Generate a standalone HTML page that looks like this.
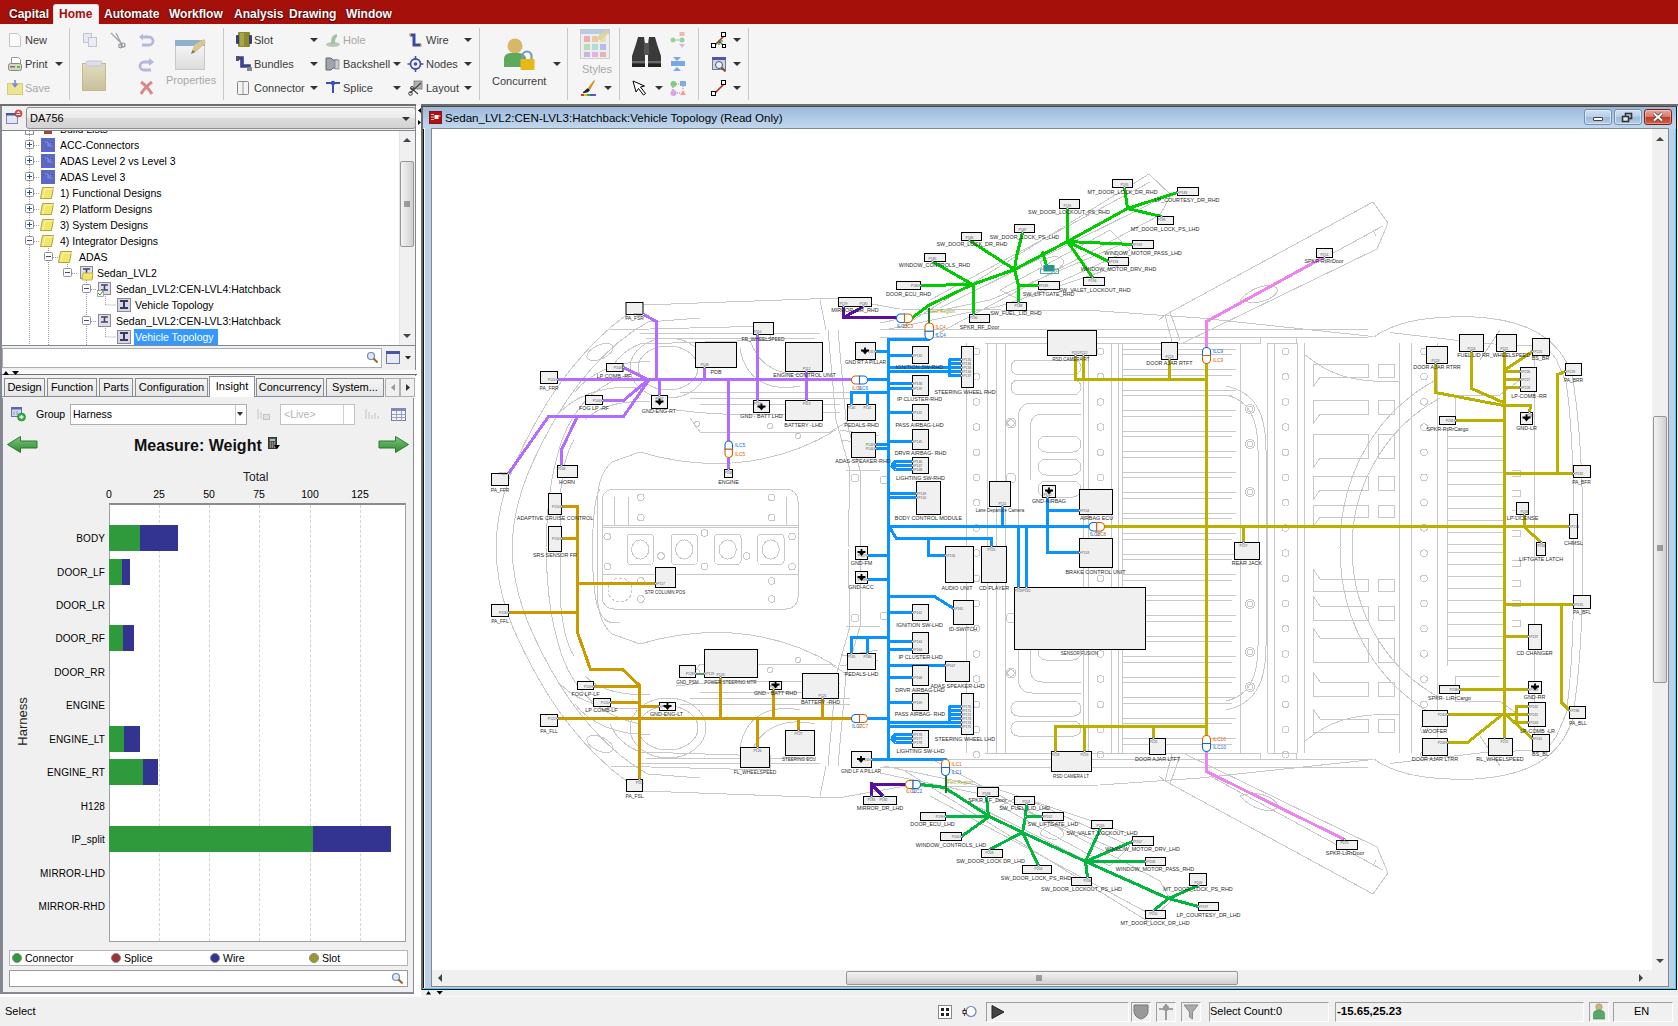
<!DOCTYPE html>
<html lang="en"><head><meta charset="utf-8"><title>Capital - Vehicle Topology</title>
<style>
*{box-sizing:border-box;margin:0;padding:0}
html,body{width:1678px;height:1026px;overflow:hidden;background:#f0f0f0;font-family:"Liberation Sans",sans-serif;font-size:12px;color:#000}
.a{position:absolute}
.t{position:absolute;white-space:nowrap;line-height:1}
#menubar{left:0;top:0;width:1678px;height:24px;background:#a6100b}
.mi{position:absolute;top:7px;font-weight:bold;font-size:12px;color:#fff;white-space:nowrap;line-height:14px;text-shadow:0 0 2px #400,0 1px 1px #500}
#hometab{left:53px;top:4px;width:46px;height:21px;background:#f5f5f5;border:1px solid #cfe0ea;border-bottom:none;border-radius:3px 3px 0 0}
#ribbon{left:0;top:24px;width:1678px;height:80px;background:#f5f5f5}
.rl{position:absolute;font-size:11px;color:#3c3c3c;white-space:nowrap;line-height:14px}
.rl.g{color:#a8a8a8}
.sep{position:absolute;top:28px;width:1px;height:72px;background:#c9c9c9}
.dd{position:absolute;width:0;height:0;border-left:4px solid transparent;border-right:4px solid transparent;border-top:4px solid #333}
</style></head><body>

<div id="menubar" class="a"></div><div id="hometab" class="a"></div>
<div class="mi" style="left:9px;">Capital</div>
<div class="mi" style="left:59px;color:#a6100b;text-shadow:none;">Home</div>
<div class="mi" style="left:104px;">Automate</div>
<div class="mi" style="left:169px;">Workflow</div>
<div class="mi" style="left:234px;">Analysis</div>
<div class="mi" style="left:289px;">Drawing</div>
<div class="mi" style="left:346px;">Window</div>
<div id="ribbon" class="a"></div>
<div class="a" style="left:0;top:104px;width:1678px;height:2px;background:#f0f0f0"></div>
<div class="sep" style="left:69px"></div>
<div class="sep" style="left:223px"></div>
<div class="sep" style="left:479px"></div>
<div class="sep" style="left:567px"></div>
<div class="sep" style="left:619px"></div>
<div class="sep" style="left:698px"></div>
<div class="sep" style="left:748px"></div>
<div class="rl" style="left:25px;top:33px">New</div>
<div class="rl" style="left:25px;top:57px">Print</div>
<div class="rl g" style="left:25px;top:81px">Save</div>
<div class="rl" style="left:254px;top:33px">Slot</div>
<div class="rl" style="left:254px;top:57px">Bundles</div>
<div class="rl" style="left:254px;top:81px">Connector</div>
<div class="rl g" style="left:343px;top:33px">Hole</div>
<div class="rl" style="left:343px;top:57px">Backshell</div>
<div class="rl" style="left:343px;top:81px">Splice</div>
<div class="rl" style="left:426px;top:33px">Wire</div>
<div class="rl" style="left:426px;top:57px">Nodes</div>
<div class="rl" style="left:426px;top:81px">Layout</div>
<div class="rl g" style="left:166px;top:73px">Properties</div>
<div class="rl" style="left:492px;top:74px">Concurrent</div>
<div class="rl g" style="left:582px;top:62px">Styles</div>
<div class="dd" style="left:55px;top:62px"></div>
<div class="dd" style="left:310px;top:38px"></div>
<div class="dd" style="left:310px;top:62px"></div>
<div class="dd" style="left:310px;top:86px"></div>
<div class="dd" style="left:393px;top:62px"></div>
<div class="dd" style="left:393px;top:86px"></div>
<div class="dd" style="left:464px;top:38px"></div>
<div class="dd" style="left:464px;top:62px"></div>
<div class="dd" style="left:464px;top:86px"></div>
<div class="dd" style="left:553px;top:62px"></div>
<div class="dd" style="left:604px;top:86px"></div>
<div class="dd" style="left:655px;top:86px"></div>
<div class="dd" style="left:733px;top:38px"></div>
<div class="dd" style="left:733px;top:62px"></div>
<div class="dd" style="left:733px;top:86px"></div>
<svg class="a" style="left:0;top:24px" width="760" height="80" viewBox="0 24 760 80">
<defs>
<linearGradient id="gPaste" x1="0" y1="0" x2="0" y2="1"><stop offset="0" stop-color="#e2dcc0"/><stop offset="1" stop-color="#c9c09a"/></linearGradient>
<linearGradient id="gProp" x1="0" y1="0" x2="0" y2="1"><stop offset="0" stop-color="#fafafa"/><stop offset="1" stop-color="#dcdcdc"/></linearGradient>
</defs>
<!-- New -->
<path d="M9.5 33.5h8l3 3v10h-11z" fill="#fbfbfb" stroke="#c4c4c4"/>
<!-- Print -->
<path d="M11.5 57.5h7l2 2v5h-9z" fill="#fff" stroke="#9a9a9a"/><rect x="8.5" y="63.5" width="13" height="7" rx="2" fill="#d9d7c3" stroke="#8a8872"/><rect x="17" y="66" width="3" height="2" fill="#3ecf3e"/><rect x="10" y="66" width="5" height="1.5" fill="#77756a"/>
<!-- Save -->
<rect x="7.5" y="83.5" width="15" height="11" fill="#ebe58f" stroke="#d3cd7a"/><path d="M15 80v6m-2.5-2.5l2.5 3 2.5-3" stroke="#7a86e0" stroke-width="1.6" fill="none"/>
<!-- Copy -->
<rect x="83.5" y="33.5" width="8" height="9" fill="#e8e8f0" stroke="#c4c4d0"/><rect x="88.5" y="37.5" width="8" height="9" fill="#ececf4" stroke="#c4c4d0"/>
<!-- Scissors -->
<path d="M111 33l11 11M116 33l5 10" stroke="#a0a0a8" stroke-width="1.2" fill="none"/><circle cx="123" cy="45" r="2" fill="none" stroke="#909098" stroke-width="1.2"/><circle cx="120.5" cy="46" r="1.8" fill="none" stroke="#909098" stroke-width="1.2"/>
<!-- Undo -->
<path d="M141 37h8a4 4 0 0 1 0 8h-7" fill="none" stroke="#b4b8dc" stroke-width="2.8"/><path d="M139 37l4-3.5v7z" fill="#b4b8dc"/>
<!-- Redo -->
<path d="M151 62h-7a4 4 0 0 0 0 8h7" fill="none" stroke="#b4b8dc" stroke-width="2.8"/><path d="M154 62l-5-4v8z" fill="#b4b8dc"/>
<!-- Delete -->
<path d="M141 82q6 4 11 12M152 82q-7 5-11 12" stroke="#d98888" stroke-width="3" fill="none"/>
<!-- Paste -->
<rect x="82.5" y="63.5" width="23" height="27" fill="url(#gPaste)" stroke="#c3ba94"/><rect x="86" y="61" width="16" height="5" rx="1.5" fill="#dedee8" stroke="#c4c4d4"/>
<!-- Properties -->
<rect x="175.5" y="40.5" width="29" height="29" fill="url(#gProp)" stroke="#c8c8c8"/><rect x="175" y="40" width="30" height="6" fill="#8fb0d0"/><path d="M191 54l3-9 10-6 2 4-9 8z" fill="#d8c690"/><path d="M191 54l1.5-4 3 2z" fill="#8a7a50"/>
<!-- Slot -->
<rect x="238" y="32" width="12" height="15" rx="1" fill="#8c8a2e"/><rect x="236" y="35" width="3" height="9" rx="1" fill="#3a3f70"/><rect x="249" y="35" width="3" height="9" rx="1" fill="#3a3f70"/><rect x="240" y="33" width="4" height="13" fill="#a8a648"/>
<!-- Bundles -->
<path d="M238 58h4v8h7v4" fill="none" stroke="#3c4290" stroke-width="3.6"/><rect x="236" y="56" width="3" height="5" fill="#555"/><rect x="247" y="67" width="5" height="4" fill="#888"/>
<!-- Connector -->
<rect x="237.5" y="81.5" width="11" height="13" rx="1" fill="#f4f4f4" stroke="#888"/><path d="M243 82v12" stroke="#999"/>
<!-- Hole -->
<ellipse cx="333" cy="44.5" rx="7" ry="2.5" fill="#b8c8b8"/><path d="M331 44c0-6 1-9 6-10v3c-2 1-2 4-2 7z" fill="#a4c0a4"/>
<!-- Backshell -->
<path d="M326 58h5l2 2h5v8h-5l-2 2h-5z" fill="#a0a4ac" stroke="#60646c"/><rect x="335" y="60" width="4" height="9" fill="#c8ccd4" stroke="#70747c" stroke-width=".6"/>
<!-- Splice -->
<path d="M326 83h14M333 83v10" stroke="#3c50b0" stroke-width="2" fill="none"/><circle cx="333" cy="83" r="2.2" fill="#3c50b0"/>
<!-- Wire -->
<path d="M410 35h4v10h7" fill="none" stroke="#3c48a8" stroke-width="3"/><rect x="409" y="33.5" width="2" height="2" fill="#e8b030"/><rect x="420" y="44.5" width="2" height="2" fill="#e8b030"/>
<!-- Nodes -->
<circle cx="415.5" cy="64" r="5" fill="none" stroke="#4450b0" stroke-width="1.8"/><circle cx="415.5" cy="64" r="1.8" fill="#4450b0"/><path d="M415.5 56v3m0 10v3m-8-8h3m10 0h3" stroke="#4450b0" stroke-width="1.6"/>
<!-- Layout -->
<rect x="414" y="81" width="8" height="8" fill="#b0b0b0" stroke="#777" stroke-width=".8"/><path d="M410 93l11-10M411 88l7 6" stroke="#444" stroke-width="1.2"/><circle cx="410.5" cy="93.5" r="1.8" fill="none" stroke="#333"/><circle cx="412" cy="88" r="1.5" fill="none" stroke="#333"/>
<!-- Concurrent -->
<circle cx="515" cy="46" r="7.5" fill="#d6b868"/><path d="M504 67v-8c0-4 4-6 7-6h8c4 0 7 3 7 6v8z" fill="#5cab5c"/><path d="M522.5 60v-4a4.5 4.5 0 0 1 9 0v4" fill="none" stroke="#7a9ac0" stroke-width="2.2"/><rect x="520.5" y="59" width="14" height="11" rx="1" fill="#e8b818"/>
<!-- Styles -->
<rect x="580.5" y="29.5" width="29" height="29" fill="#ededed" stroke="#cfcfcf"/><rect x="580" y="29" width="30" height="5" fill="#b8cce0"/>
<g opacity=".75"><rect x="584" y="36" width="6" height="6" fill="#e89aa8"/><rect x="592" y="36" width="6" height="6" fill="#e8c088"/><rect x="600" y="36" width="6" height="6" fill="#e0e090"/><rect x="584" y="44" width="6" height="6" fill="#a8d8a0"/><rect x="592" y="44" width="6" height="6" fill="#98d8d0"/><rect x="600" y="44" width="6" height="6" fill="#a0b0e8"/><rect x="584" y="52" width="6" height="5" fill="#c0a0e0"/><rect x="592" y="52" width="6" height="5" fill="#e0a0d8"/><rect x="600" y="52" width="6" height="5" fill="#e8a0a0"/></g>
<path d="M597 41l2-6 9-6 2 3-8 7z" fill="#ddd0a0" opacity=".9"/>
<!-- Brush -->
<path d="M583 92c2-1 3-3 5-4l2 2c-1 2-3 3-7 3z" fill="#222"/><path d="M588 88l6-8 1 1-5 9z" fill="#d89028"/><rect x="581" y="94" width="3" height="2" fill="#e03030"/><rect x="584" y="94" width="3" height="2" fill="#e0c030"/><rect x="587" y="94" width="3" height="2" fill="#30b040"/><rect x="590" y="94" width="3" height="2" fill="#3060e0"/><rect x="593" y="94" width="3" height="2" fill="#a030d0"/>
<!-- Binoculars -->
<path d="M636 44l2-7h6l1 7v20h-13v-8z" fill="#3a3a3a"/><path d="M657 44l-2-7h-6l-1 7v20h13v-8z" fill="#3a3a3a"/><rect x="644" y="43" width="5" height="12" fill="#555"/><rect x="632" y="64" width="13" height="3" fill="#222"/><rect x="648" y="64" width="13" height="3" fill="#222"/><rect x="632" y="61.5" width="13" height="1" fill="#999"/><rect x="648" y="61.5" width="13" height="1" fill="#999"/>
<!-- Cursor -->
<path d="M633 81l3 11 2.5-3.5 5 6.5 2-1.5-5-6.5 4-1z" fill="#fff" stroke="#000" stroke-width="1"/>
<!-- small icons col -->
<g opacity=".6"><circle cx="673" cy="40" r="2.5" fill="#58c058"/><circle cx="682" cy="40" r="2.5" fill="#58c058"/><rect x="679.5" y="32" width="5" height="4" fill="#f09090"/><path d="M682 48l-3-4h6z" fill="#c090e0"/><path d="M675.5 40h4" stroke="#888"/></g>
<path d="M673 57h8l-4 4zM673 71h8l-4-4z" fill="#78a8e8"/><rect x="671" y="61" width="14" height="5" fill="#78a8e8"/>
<g opacity=".75"><circle cx="673.5" cy="84" r="3" fill="#58c058"/><rect x="680" y="81" width="6" height="5" fill="#6090e0"/><circle cx="673.5" cy="93" r="3" fill="#d088e0"/><path d="M683 90l3 5h-6z" fill="#f08080"/><path d="M676 84h4m-7 3v3m4 3h3m3-7v4" stroke="#666" stroke-dasharray="1 1"/></g>
<!-- right icons -->
<path d="M714 46l11-11" stroke="#c02020" stroke-width="1.6"/><rect x="711.5" y="43.5" width="4" height="4" fill="#fff" stroke="#000"/><rect x="721.5" y="32.5" width="4" height="4" fill="#fff" stroke="#000"/><path d="M719 41l5 5m-5-5v4m0-4h4" stroke="#208020" stroke-width="1.2" fill="none"/><rect x="722.5" y="44.5" width="3" height="3" fill="#fff" stroke="#000"/>
<rect x="712.5" y="57.5" width="13" height="12" fill="#d0d4e8" stroke="#7078a8"/><rect x="712" y="57" width="14" height="3" fill="#5058a0"/><circle cx="719" cy="65" r="3.5" fill="#e8f0ff" stroke="#555"/><path d="M721.5 67.5l4 4" stroke="#805020" stroke-width="2"/>
<path d="M714 94l11-11" stroke="#c02020" stroke-width="1.6"/><rect x="711.5" y="91.5" width="4" height="4" fill="#fff" stroke="#000"/><rect x="721.5" y="80.5" width="4" height="4" fill="#fff" stroke="#000"/>
</svg>
<style>
#lp{left:0;top:106px;width:416px;height:888px;background:#f0f0f0;border-left:2px solid #828790;border-right:1px solid #828790;border-bottom:1px solid #828790}
.tr{position:absolute;font-size:10.5px;white-space:nowrap;line-height:16px;height:16px;color:#000}
.tab{position:absolute;top:378px;height:18px;border:1px solid #898c95;border-bottom:none;background:linear-gradient(#f4f4f4,#e6e6e6);font-size:11px;line-height:17px;text-align:center;white-space:nowrap;color:#000}
.cl{position:absolute;font-size:10px;white-space:nowrap;line-height:12px;letter-spacing:.1px;text-align:right;width:100px}
.ax{position:absolute;font-size:10.5px;white-space:nowrap;line-height:12px;text-align:center;width:30px}
.bar{position:absolute;height:26px}
</style>
<div id="lp" class="a"></div>
<div class="a" style="left:416px;top:106px;width:5px;height:891px;background:#fff"></div>
<div class="a" style="left:414px;top:376px;width:3px;height:621px;background:#fff"></div>
<div class="a" style="left:0;top:994px;width:421px;height:3px;background:#fff"></div>
<div class="a" style="left:0;top:104px;width:416px;height:2px;background:#6e6e6e"></div>
<div class="a" style="left:26px;top:107px;width:390px;height:22px;border:1px solid #8e8f8f;border-radius:3px;background:linear-gradient(#f4f4f4 0%,#ebebeb 50%,#dddddd 50%,#d2d2d2 100%)"></div>
<div class="t" style="left:30px;top:113px;font-size:11px">DA756</div>
<div class="dd" style="left:402px;top:117px"></div>
<svg class="a" style="left:5px;top:108px" width="20" height="20"><rect x="1.5" y="5.5" width="11" height="10" fill="#e4e6f4" stroke="#8088b0"/><rect x="1" y="5" width="12" height="2.5" fill="#4a54a0"/><circle cx="13.5" cy="5.5" r="3.5" fill="#e04848" stroke="#b02828" stroke-width=".6"/><rect x="11.5" y="6" width="4" height="1" fill="#fff"/><path d="M13.5 3l1.8 2h-3.6z" fill="#fff"/></svg>
<div class="a" style="left:2px;top:130px;width:413px;height:216px;background:#fff;border-top:1px solid #828790;border-bottom:1px solid #828790"></div>
<div class="a" style="left:399px;top:131px;width:16px;height:214px;background:#f0f0f0;border-left:1px solid #e4e4e4"></div>
<div class="a" style="left:400px;top:161px;width:14px;height:86px;border:1px solid #979797;border-radius:2px;background:linear-gradient(90deg,#f3f3f3,#e2e2e2 50%,#cfcfcf)"></div>
<svg class="a" style="left:399px;top:131px" width="16" height="214"><path d="M4 11l4-4 4 4z" fill="#444"/><path d="M4 203l4 4 4-4z" fill="#444"/><path d="M5 71h6M5 73h6M5 75h6" stroke="#555" stroke-width="1"/></svg>
<svg class="a" style="left:0;top:131px" width="399" height="214" viewBox="0 131 399 214"><g stroke="#9a9a9a" stroke-width="1" stroke-dasharray="1 1" fill="none"><path d="M29.5 131v214"/><path d="M48.5 246v99"/><path d="M67.5 262v6"/><path d="M86.5 278v67"/><path d="M105.5 294v11h10"/><path d="M105.5 326v11h10"/><path d="M34 145.5h6"/><path d="M34 161.5h6"/><path d="M34 177.5h6"/><path d="M34 193.5h6"/><path d="M34 209.5h6"/><path d="M34 225.5h6"/><path d="M34 241.5h6"/><path d="M53 257.5h6"/><path d="M72 273.5h6"/><path d="M91 289.5h6"/><path d="M91 321.5h6"/></g><rect x="44" y="131" width="8" height="3" fill="#a84040"/><path d="M25.5 131v3.5h8v-3.5" fill="none" stroke="#919191"/><rect x="25.5" y="140.5" width="8" height="8" rx="1" fill="#fcfcfc" stroke="#919191"/><path d="M27 144.5h5" stroke="#334a94"/><path d="M29.5 142v5" stroke="#334a94"/><rect x="41" y="138" width="14" height="14" fill="#5e66c4"/><path d="M45 142h3v4h4M48 144h3" stroke="#8c92dc" fill="none"/><rect x="25.5" y="156.5" width="8" height="8" rx="1" fill="#fcfcfc" stroke="#919191"/><path d="M27 160.5h5" stroke="#334a94"/><path d="M29.5 158v5" stroke="#334a94"/><rect x="41" y="154" width="14" height="14" fill="#5e66c4"/><path d="M45 158h3v4h4M48 160h3" stroke="#8c92dc" fill="none"/><rect x="25.5" y="172.5" width="8" height="8" rx="1" fill="#fcfcfc" stroke="#919191"/><path d="M27 176.5h5" stroke="#334a94"/><path d="M29.5 174v5" stroke="#334a94"/><rect x="41" y="170" width="14" height="14" fill="#5e66c4"/><path d="M45 174h3v4h4M48 176h3" stroke="#8c92dc" fill="none"/><rect x="25.5" y="188.5" width="8" height="8" rx="1" fill="#fcfcfc" stroke="#919191"/><path d="M27 192.5h5" stroke="#334a94"/><path d="M29.5 190v5" stroke="#334a94"/><path d="M42.5 187.5h11l-2 11h-11z" fill="#f1e66a" stroke="#b0a43a"/><path d="M43 198l2-9h9" fill="none" stroke="#fbf6b0"/><rect x="25.5" y="204.5" width="8" height="8" rx="1" fill="#fcfcfc" stroke="#919191"/><path d="M27 208.5h5" stroke="#334a94"/><path d="M29.5 206v5" stroke="#334a94"/><path d="M42.5 203.5h11l-2 11h-11z" fill="#f1e66a" stroke="#b0a43a"/><path d="M43 214l2-9h9" fill="none" stroke="#fbf6b0"/><rect x="25.5" y="220.5" width="8" height="8" rx="1" fill="#fcfcfc" stroke="#919191"/><path d="M27 224.5h5" stroke="#334a94"/><path d="M29.5 222v5" stroke="#334a94"/><path d="M42.5 219.5h11l-2 11h-11z" fill="#f1e66a" stroke="#b0a43a"/><path d="M43 230l2-9h9" fill="none" stroke="#fbf6b0"/><rect x="25.5" y="236.5" width="8" height="8" rx="1" fill="#fcfcfc" stroke="#919191"/><path d="M27 240.5h5" stroke="#334a94"/><path d="M42.5 235.5h11l-2 11h-11z" fill="#f1e66a" stroke="#b0a43a"/><path d="M43 246l2-9h9" fill="none" stroke="#fbf6b0"/><rect x="44.5" y="252.5" width="8" height="8" rx="1" fill="#fcfcfc" stroke="#919191"/><path d="M46 256.5h5" stroke="#334a94"/><path d="M60.5 251.5h11l-2 11h-11z" fill="#f1e66a" stroke="#b0a43a"/><path d="M61 262l2-9h9" fill="none" stroke="#fbf6b0"/><rect x="63.5" y="268.5" width="8" height="8" rx="1" fill="#fcfcfc" stroke="#919191"/><path d="M65 272.5h5" stroke="#334a94"/><rect x="80.5" y="266.5" width="12" height="12" fill="#e0e0e4" stroke="#8a8a92"/><path d="M83 269h7M83 274h7M86.5 269v5" stroke="#40407a" stroke-width="1.6"/><path d="M83 273h10l-1 7h-10z" fill="#f1e66a" stroke="#b0a43a" stroke-width=".7"/><rect x="82.5" y="284.5" width="8" height="8" rx="1" fill="#fcfcfc" stroke="#919191"/><path d="M84 288.5h5" stroke="#334a94"/><rect x="98.5" y="282.5" width="12" height="12" fill="#e0e0e4" stroke="#8a8a92"/><path d="M101 285h7M101 290h7M104.5 285v5" stroke="#40407a" stroke-width="1.6"/><rect x="97.5" y="290.5" width="6" height="6" fill="#fff" stroke="#888" stroke-width=".7"/><path d="M98 293l2 2 3-4" stroke="#20a020" fill="none"/><rect x="117.5" y="298.5" width="13" height="13" fill="#d8d8e0" stroke="#8a8a92"/><path d="M120 301h8M120 308h8M124 301v7" stroke="#38386e" stroke-width="2"/><rect x="82.5" y="316.5" width="8" height="8" rx="1" fill="#fcfcfc" stroke="#919191"/><path d="M84 320.5h5" stroke="#334a94"/><rect x="98.5" y="314.5" width="12" height="12" fill="#e0e0e4" stroke="#8a8a92"/><path d="M101 317h7M101 322h7M104.5 317v5" stroke="#40407a" stroke-width="1.6"/><rect x="117.5" y="330.5" width="13" height="13" fill="#d8d8e0" stroke="#8a8a92"/><path d="M120 333h8M120 340h8M124 333v7" stroke="#38386e" stroke-width="2"/></svg>
<div class="a" style="left:134px;top:329px;width:84px;height:16px;background:#3399ff"></div>
<div class="a" style="left:60px;top:131px;width:100px;height:4px;overflow:hidden"><div class="tr" style="left:0;top:-10px">Build Lists</div></div>
<div class="tr" style="left:60px;top:137px">ACC-Connectors</div>
<div class="tr" style="left:60px;top:153px">ADAS Level 2 vs Level 3</div>
<div class="tr" style="left:60px;top:169px">ADAS Level 3</div>
<div class="tr" style="left:60px;top:185px">1) Functional Designs</div>
<div class="tr" style="left:60px;top:201px">2) Platform Designs</div>
<div class="tr" style="left:60px;top:217px">3) System Designs</div>
<div class="tr" style="left:60px;top:233px">4) Integrator Designs</div>
<div class="tr" style="left:79px;top:249px">ADAS</div>
<div class="tr" style="left:97px;top:265px">Sedan_LVL2</div>
<div class="tr" style="left:116px;top:281px">Sedan_LVL2:CEN-LVL4:Hatchback</div>
<div class="tr" style="left:135px;top:297px">Vehicle Topology</div>
<div class="tr" style="left:116px;top:313px">Sedan_LVL2:CEN-LVL3:Hatchback</div>
<div class="tr" style="left:135px;top:329px;color:#fff">Vehicle Topology</div>
<div class="a" style="left:2px;top:348px;width:380px;height:20px;background:#fff;border:1px solid #abadb3"></div>
<svg class="a" style="left:364px;top:350px" width="50" height="16"><circle cx="7" cy="6" r="3.5" fill="#dce8f8" stroke="#7a8aa8" stroke-width="1.2"/><path d="M9.5 8.5l4 4" stroke="#9a6420" stroke-width="2"/><rect x="22.5" y="1.5" width="13" height="12" fill="#e8eaf4" stroke="#7078a8"/><rect x="22" y="1" width="14" height="3" fill="#4a54a0"/><path d="M41 6h6l-3 3.5z" fill="#222"/></svg>
<div class="a" style="left:2px;top:370px;width:414px;height:4px;background:#fafafa"></div><div class="a" style="left:0;top:374px;width:417px;height:1px;background:#6e6e6e"></div>
<svg class="a" style="left:0;top:369px" width="30" height="8"><path d="M3 6l3-4 3 4zM12 2l3.5 4 3.5-4z" fill="#000"/></svg>
<svg class="a" style="left:416px;top:106px" width="6" height="24"><path d="M5 2l-3 2.5 3 2.5zM2 14l3 2.5-3 2.5z" fill="#000"/></svg>
<div class="a" style="left:2px;top:396px;width:412px;height:1px;background:#898c95"></div>
<div class="tab" style="left:4px;width:41px">Design</div>
<div class="tab" style="left:47px;width:50px">Function</div>
<div class="tab" style="left:99px;width:34px">Parts</div>
<div class="tab" style="left:135px;width:73px">Configuration</div>
<div class="tab" style="left:256px;width:68px">Concurrency</div>
<div class="tab" style="left:326px;width:58px">System...</div>
<div class="tab" style="left:209px;top:376px;width:46px;height:21px;background:#fff;line-height:19px">Insight</div>
<div class="a" style="left:384px;top:377px;width:31px;height:20px;background:#f0f0f0"></div>
<div class="a" style="left:385px;top:378px;width:15px;height:19px;border:1px solid #b0b0b0;background:#f0f0f0"></div><div class="a" style="left:400px;top:378px;width:15px;height:19px;border:1px solid #b0b0b0;background:#f0f0f0"></div>
<svg class="a" style="left:385px;top:378px" width="30" height="19"><path d="M10 6l-4 3.5 4 3.5z" fill="#999"/><path d="M21 6l4 3.5-4 3.5z" fill="#333"/><path d="M-2 0q4 9 -1 19" stroke="#898c95" fill="none"/></svg>
<div class="a" style="left:2px;top:398px;width:412px;height:595px;border-left:1px solid #898c95;border-right:1px solid #898c95;border-bottom:1px solid #898c95"></div>
<svg class="a" style="left:10px;top:405px" width="20" height="18"><rect x="1.5" y="2.5" width="10" height="9" fill="#d4d8f0" stroke="#6870b0"/><rect x="1" y="2" width="11" height="2.5" fill="#5a64b4"/><path d="M3 7h2M6 7h2M3 9h2M6 9h2" stroke="#8890c8"/><circle cx="11.5" cy="12" r="4" fill="#30b040" stroke="#188028" stroke-width=".6"/><path d="M9.5 12h4M11.5 10v4" stroke="#fff" stroke-width="1.3"/></svg>
<div class="t" style="left:36px;top:409px;font-size:10.5px">Group</div>
<div class="a" style="left:70px;top:404px;width:177px;height:21px;background:#fff;border:1px solid #abadb3"></div><div class="a" style="left:235px;top:405px;width:1px;height:19px;background:#c8c8c8"></div>
<div class="t" style="left:73px;top:409px;font-size:10.5px">Harness</div>
<div class="dd" style="left:237px;top:412px;border-left-width:3.5px;border-right-width:3.5px"></div>
<div class="a" style="left:280px;top:404px;width:75px;height:21px;background:#fff;border:1px solid #c0c2c8"></div><div class="a" style="left:343px;top:405px;width:1px;height:19px;background:#d0d0d0"></div>
<div class="t" style="left:284px;top:409px;font-size:10.5px;color:#b4b4b4">&lt;Live&gt;</div>
<svg class="a" style="left:255px;top:405px" width="155" height="18"><g stroke="#c4c4c4" fill="none"><path d="M3 4v10M6 7v7M9 10v4"/><rect x="8.5" y="9.5" width="6" height="5" fill="#e0e0e0"/><path d="M111 4v10M114 7v7M117 10v4M120 8v6M123 11v3"/></g><rect x="136.5" y="3.5" width="14" height="12" fill="#f4f4fa" stroke="#7a80a8"/><rect x="136" y="3" width="15" height="3" fill="#8088b8"/><path d="M137 9.5h14M137 12.5h14M141.5 6v10M146.5 6v10" stroke="#9aa0c0"/></svg>
<svg class="a" style="left:5px;top:434px" width="406" height="22"><defs><linearGradient id="gArr" x1="0" y1="0" x2="0" y2="1"><stop offset="0" stop-color="#7cc47c"/><stop offset="1" stop-color="#2e8c2e"/></linearGradient></defs><path d="M2.5 10.5l13-8v4.5h16.5v7h-16.5v4.5z" fill="url(#gArr)" stroke="#2a7a2a"/><path d="M403.5 10.5l-13-8v4.5h-16.5v7h16.5v4.5z" fill="url(#gArr)" stroke="#2a7a2a"/><rect x="263.5" y="3.5" width="8" height="11" fill="#555" stroke="#333"/><rect x="265" y="5" width="5" height="2" fill="#9c9"/><path d="M265 9h5M265 11h5M265 13h5" stroke="#bbb" stroke-dasharray="1 1"/><path d="M269 11h6l-3 4z" fill="#000"/></svg>
<div class="t" style="left:134px;top:438px;font-size:16px;font-weight:bold;color:#111">Measure: Weight</div>
<div class="t" style="left:243px;top:471px;font-size:12px;color:#222">Total</div>
<div class="ax" style="left:94px;top:488px">0</div>
<div class="ax" style="left:144px;top:488px">25</div>
<div class="ax" style="left:194px;top:488px">50</div>
<div class="ax" style="left:244px;top:488px">75</div>
<div class="ax" style="left:295px;top:488px">100</div>
<div class="ax" style="left:345px;top:488px">125</div>
<div class="a" style="left:109px;top:503px;width:297px;height:439px;background:#fff;border:1px solid #a0a0a0;border-top:2px solid #8c8c8c"></div>
<div class="a" style="left:159px;top:505px;width:0;height:436px;border-left:1px dashed #d4d4d4"></div>
<div class="a" style="left:209px;top:505px;width:0;height:436px;border-left:1px dashed #d4d4d4"></div>
<div class="a" style="left:259px;top:505px;width:0;height:436px;border-left:1px dashed #d4d4d4"></div>
<div class="a" style="left:310px;top:505px;width:0;height:436px;border-left:1px dashed #d4d4d4"></div>
<div class="a" style="left:360px;top:505px;width:0;height:436px;border-left:1px dashed #d4d4d4"></div>
<div class="cl" style="left:5px;top:533px">BODY</div>
<div class="cl" style="left:5px;top:567px">DOOR_LF</div>
<div class="cl" style="left:5px;top:600px">DOOR_LR</div>
<div class="cl" style="left:5px;top:633px">DOOR_RF</div>
<div class="cl" style="left:5px;top:667px">DOOR_RR</div>
<div class="cl" style="left:5px;top:700px">ENGINE</div>
<div class="cl" style="left:5px;top:734px">ENGINE_LT</div>
<div class="cl" style="left:5px;top:767px">ENGINE_RT</div>
<div class="cl" style="left:5px;top:801px">H128</div>
<div class="cl" style="left:5px;top:834px">IP_split</div>
<div class="cl" style="left:5px;top:868px">MIRROR-LHD</div>
<div class="cl" style="left:5px;top:901px">MIRROR-RHD</div>
<div class="bar" style="left:109px;top:525px;width:31px;background:#2e9a3c"></div><div class="bar" style="left:140px;top:525px;width:38px;background:#333391"></div>
<div class="bar" style="left:109px;top:559px;width:13px;background:#2e9a3c"></div><div class="bar" style="left:122px;top:559px;width:8px;background:#333391"></div>
<div class="bar" style="left:109px;top:625px;width:14px;background:#2e9a3c"></div><div class="bar" style="left:123px;top:625px;width:11px;background:#333391"></div>
<div class="bar" style="left:109px;top:726px;width:15px;background:#2e9a3c"></div><div class="bar" style="left:124px;top:726px;width:16px;background:#333391"></div>
<div class="bar" style="left:109px;top:759px;width:34px;background:#2e9a3c"></div><div class="bar" style="left:143px;top:759px;width:15px;background:#333391"></div>
<div class="bar" style="left:109px;top:826px;width:204px;background:#2e9a3c"></div><div class="bar" style="left:313px;top:826px;width:78px;background:#333391"></div>
<div class="t" style="left:-8px;top:715px;width:60px;text-align:center;font-size:13px;transform:rotate(-90deg);color:#222">Harness</div>
<div class="a" style="left:9px;top:950px;width:399px;height:16px;background:#fff;border:1px solid #b4b4b4"></div>
<div class="a" style="left:12px;top:953px;width:10px;height:10px;border-radius:5px;background:#2e9a3c;border:1px solid #888"></div><div class="t" style="left:25px;top:953px;font-size:10.5px">Connector</div>
<div class="a" style="left:111px;top:953px;width:10px;height:10px;border-radius:5px;background:#a03030;border:1px solid #888"></div><div class="t" style="left:124px;top:953px;font-size:10.5px">Splice</div>
<div class="a" style="left:210px;top:953px;width:10px;height:10px;border-radius:5px;background:#333391;border:1px solid #888"></div><div class="t" style="left:223px;top:953px;font-size:10.5px">Wire</div>
<div class="a" style="left:309px;top:953px;width:10px;height:10px;border-radius:5px;background:#9a982e;border:1px solid #888"></div><div class="t" style="left:322px;top:953px;font-size:10.5px">Slot</div>
<div class="a" style="left:9px;top:970px;width:399px;height:17px;background:#fff;border:1px solid #9a9a9a"></div>
<svg class="a" style="left:390px;top:971px" width="16" height="16"><circle cx="6" cy="6" r="3.5" fill="#dce8f8" stroke="#7a8aa8" stroke-width="1.2"/><path d="M8.5 8.5l4 4" stroke="#9a6420" stroke-width="2"/></svg>
<div class="a" style="left:421px;top:104px;width:1257px;height:2px;background:#6e6e6e"></div>
<div class="a" style="left:421px;top:106px;width:1256px;height:884px;background:#b9d1ea;border-left:2px solid #6a6a6a;border-right:1px solid #111;border-bottom:1px solid #111"></div>
<div class="a" style="left:424px;top:988px;width:1252px;height:1px;background:#38d8f8"></div>
<div class="a" style="left:1675px;top:128px;width:1px;height:861px;background:#38d8f8"></div>
<div class="a" style="left:423px;top:128px;width:1px;height:860px;background:#111"></div>
<div class="a" style="left:423px;top:107px;width:1253px;height:22px;background:linear-gradient(#9db9d9,#b4cde8 60%,#c2d8ee)"></div>
<div class="a" style="left:421px;top:106px;width:1256px;height:1px;background:#484848"></div>
<div class="t" style="left:445px;top:112px;font-size:11.6px;color:#000">Sedan_LVL2:CEN-LVL3:Hatchback:Vehicle Topology (Read Only)</div>
<svg class="a" style="left:429px;top:111px" width="14" height="14"><rect x=".5" y=".5" width="12" height="12" fill="#b01010" stroke="#901010"/><rect x="5.5" y="4" width="4" height="4" fill="#fff"/><path d="M2 3.5h3M2 6h3M2 8.5h3M9 5h2.5" stroke="#f0c0c0"/></svg>
<div class="a" style="left:1584px;top:109px;width:28px;height:16px;border:1px solid #6f8fb4;border-radius:3px;background:linear-gradient(#cfe0f2 0%,#b8cfe8 48%,#9fbbda 52%,#b4cce6 100%);box-shadow:inset 0 0 0 1px rgba(255,255,255,.5)"></div>
<div class="a" style="left:1614px;top:109px;width:28px;height:16px;border:1px solid #6f8fb4;border-radius:3px;background:linear-gradient(#cfe0f2 0%,#b8cfe8 48%,#9fbbda 52%,#b4cce6 100%);box-shadow:inset 0 0 0 1px rgba(255,255,255,.5)"></div>
<div class="a" style="left:1644px;top:109px;width:28px;height:16px;border:1px solid #7a2018;border-radius:3px;background:linear-gradient(#e8a898 0%,#d87868 48%,#c03c28 52%,#d06048 100%);box-shadow:inset 0 0 0 1px rgba(255,255,255,.35)"></div>
<svg class="a" style="left:1584px;top:109px" width="90" height="16"><rect x="9.5" y="8.5" width="9" height="3" rx=".5" fill="#fff" stroke="#444"/><rect x="41.5" y="4.5" width="6" height="5" fill="none" stroke="#333" stroke-width="1.6"/><rect x="38.5" y="7.5" width="6" height="5" fill="#dde8f4" stroke="#333" stroke-width="1.6"/><path d="M70 4.5l8 7M78 4.5l-8 7" stroke="#444" stroke-width="3.6"/><path d="M70 4.5l8 7M78 4.5l-8 7" stroke="#fff" stroke-width="2"/></svg>
<div class="a" style="left:431px;top:128px;width:1238px;height:859px;background:#f0f0f0;border:1px solid #888"></div>
<div class="a" style="left:424px;top:128px;width:1px;height:860px;background:#fff"></div>
<div class="a" style="left:432px;top:129px;width:1220px;height:841px;background:#fff"></div>
<div class="a" style="left:1653px;top:671px;width:14px;height:-0px"></div>
<div class="a" style="left:1653px;top:416px;width:14px;height:267px;border:1px solid #979797;border-radius:2px;background:linear-gradient(90deg,#f3f3f3,#e2e2e2 50%,#cfcfcf)"></div>
<svg class="a" style="left:1652px;top:130px" width="16" height="840"><path d="M4 11l4-4 4 4z" fill="#444"/><path d="M4 829l4 4 4-4z" fill="#444"/><path d="M5 416h6M5 418h6M5 420h6" stroke="#555"/></svg>
<div class="a" style="left:846px;top:971px;width:392px;height:14px;border:1px solid #979797;border-radius:2px;background:linear-gradient(#f3f3f3,#e2e2e2 50%,#cfcfcf)"></div>
<svg class="a" style="left:431px;top:970px" width="1221" height="16"><path d="M11 4l-4 4 4 4z" fill="#444"/><path d="M1208 4l4 4-4 4z" fill="#444"/><path d="M606 5v6M608 5v6M610 5v6" stroke="#555"/></svg>
<svg class="a" style="left:431px;top:130px" width="1221" height="840" viewBox="431 130 1221 840" font-family="Liberation Sans, sans-serif">
<g fill="none" stroke="#c8c8c8" stroke-width="1" shape-rendering="crispEdges"><path d="M496 548C497 500 512 465 537 420C560 378 600 328 643 305L838 298L900 309L1100 311L1200 318L1373 336.5"/>
<path d="M1374 337C1400 318 1440 316 1475 317C1530 320 1560 340 1572 375C1580 420 1583 480 1583 548"/>
<path d="M1390 332.5L1484 343.5L1546 346.5L1556 359L1566 382C1572 420 1574 470 1574 548"/>
<path d="M1534 360V548"/>
<path d="M512 548C513 505 527 470 550 428C572 388 606 345 648 322L700 318"/>
<path d="M546 548C547 500 552 470 562 440C575 405 600 380 640 372"/>
<path d="M560 548V500C562 470 566 452 574 440"/>
<path d="M597 548V500C599 480 603 470 612 462L640 452"/>
<path d="M610 330L770 326V340L640 344C625 350 615 360 610 372"/>
<path d="M640 333H820M646 338H815"/>
<ellipse cx="668" cy="368" rx="38" ry="30"/><ellipse cx="668" cy="368" rx="30" ry="22"/>
<path d="M575 392C590 372 620 360 650 362M560 412C580 392 610 385 640 388M585 420C600 405 625 400 650 402"/>
<ellipse cx="600" cy="352" rx="14" ry="7" transform="rotate(-25 600 352)"/>
<path d="M680 392H850M690 398H850M700 404H840M676 410C720 416 780 416 840 412"/>
<path d="M690 418L700 432H830L850 420"/><circle cx="697" cy="424" r="2.5"/><circle cx="770" cy="426" r="2.5"/><circle cx="798" cy="436" r="2.5"/>
<path d="M740 348C745 380 770 392 800 386M750 340C760 372 790 378 815 372"/>
<path d="M828 330L836 420L850 470L848 548M838 330L846 420L860 470V548M820 300L826 330"/>
<path d="M840 430L878 436M842 440L878 446M846 470H880"/>
<circle cx="855" cy="478" r="4"/><circle cx="884" cy="480" r="4"/>
<path d="M880 323L990 300L1120 245M884 330L1000 306L1130 262M640 452C700 470 770 470 836 430"/>
<path d="M880 329H1368M880 337H1368M985 343H1260V337M1268 343H1296V337"/><path d="M1159 320L1165 315L1373 202L1388 223L1377 249L1183 343"/>
<path d="M1383 226L1210 320M1373 230L1376 236M1240 300C1250 288 1272 280 1278 290C1274 300 1256 306 1240 300"/>
<path d="M1165 315L1172 342M1170 312L1180 340"/>
<path d="M905 325L1149 174L1171 195L1160 215L935 335"/>
<path d="M930 300L1150 182M940 308L1158 200M1000 290L1110 230L1130 250L1020 300Z"/>
<path d="M1040 262C1050 255 1062 255 1064 262C1060 272 1044 274 1040 262"/><g transform="matrix(1 0 0 -1 0 1096)"><path d="M496 548C497 500 512 465 537 420C560 378 600 328 643 305L838 298L900 309L1100 311L1200 318L1373 336.5"/>
<path d="M1374 337C1400 318 1440 316 1475 317C1530 320 1560 340 1572 375C1580 420 1583 480 1583 548"/>
<path d="M1390 332.5L1484 343.5L1546 346.5L1556 359L1566 382C1572 420 1574 470 1574 548"/>
<path d="M1534 360V548"/>
<path d="M512 548C513 505 527 470 550 428C572 388 606 345 648 322L700 318"/>
<path d="M546 548C547 500 552 470 562 440C575 405 600 380 640 372"/>
<path d="M560 548V500C562 470 566 452 574 440"/>
<path d="M597 548V500C599 480 603 470 612 462L640 452"/>
<path d="M610 330L770 326V340L640 344C625 350 615 360 610 372"/>
<path d="M640 333H820M646 338H815"/>
<ellipse cx="668" cy="368" rx="38" ry="30"/><ellipse cx="668" cy="368" rx="30" ry="22"/>
<path d="M575 392C590 372 620 360 650 362M560 412C580 392 610 385 640 388M585 420C600 405 625 400 650 402"/>
<ellipse cx="600" cy="352" rx="14" ry="7" transform="rotate(-25 600 352)"/>
<path d="M680 392H850M690 398H850M700 404H840M676 410C720 416 780 416 840 412"/>
<path d="M690 418L700 432H830L850 420"/><circle cx="697" cy="424" r="2.5"/><circle cx="770" cy="426" r="2.5"/><circle cx="798" cy="436" r="2.5"/>
<path d="M740 348C745 380 770 392 800 386M750 340C760 372 790 378 815 372"/>
<path d="M828 330L836 420L850 470L848 548M838 330L846 420L860 470V548M820 300L826 330"/>
<path d="M840 430L878 436M842 440L878 446M846 470H880"/>
<circle cx="855" cy="478" r="4"/><circle cx="884" cy="480" r="4"/>
<path d="M880 323L990 300L1120 245M884 330L1000 306L1130 262M640 452C700 470 770 470 836 430"/>
<path d="M880 329H1368M880 337H1368M985 343H1260V337M1268 343H1296V337"/><path d="M1159 320L1165 315L1373 202L1388 223L1377 249L1183 343"/>
<path d="M1383 226L1210 320M1373 230L1376 236M1240 300C1250 288 1272 280 1278 290C1274 300 1256 306 1240 300"/>
<path d="M1165 315L1172 342M1170 312L1180 340"/>
<path d="M905 325L1149 174L1171 195L1160 215L935 335"/>
<path d="M930 300L1150 182M940 308L1158 200M1000 290L1110 230L1130 250L1020 300Z"/>
<path d="M1040 262C1050 255 1062 255 1064 262C1060 272 1044 274 1040 262"/></g><path d="M966.5 343V753"/>
<path d="M987.5 343V753"/>
<path d="M996.5 343V753"/>
<path d="M1005 343V753"/>
<path d="M1083 343V753"/>
<path d="M1088 343V753"/>
<path d="M1111.5 343V753"/>
<path d="M1118 343V753"/>
<path d="M1267 343V753"/>
<path d="M1274.5 343V753"/>
<path d="M1297 343V753"/>
<path d="M1304.5 343V753"/>
<path d="M1399 343V753"/>
<path d="M1411.5 343V753"/>
<path d="M1437 343V753"/>
<circle cx="976.5" cy="351.5" r="3.3"/>
<circle cx="976.5" cy="376.7" r="3.3"/>
<circle cx="976.5" cy="401.9" r="3.3"/>
<circle cx="976.5" cy="427.1" r="3.3"/>
<circle cx="976.5" cy="452.3" r="3.3"/>
<circle cx="976.5" cy="477.5" r="3.3"/>
<circle cx="976.5" cy="502.7" r="3.3"/>
<circle cx="976.5" cy="527.9" r="3.3"/>
<circle cx="976.5" cy="553.1" r="3.3"/>
<circle cx="976.5" cy="578.3" r="3.3"/>
<circle cx="976.5" cy="603.5" r="3.3"/>
<circle cx="976.5" cy="628.7" r="3.3"/>
<circle cx="976.5" cy="653.9" r="3.3"/>
<circle cx="976.5" cy="679.1" r="3.3"/>
<circle cx="976.5" cy="704.3" r="3.3"/>
<circle cx="976.5" cy="729.5" r="3.3"/>
<circle cx="976.5" cy="754.7" r="3.3"/>
<circle cx="1100.5" cy="351.5" r="3.3"/>
<circle cx="1100.5" cy="376.7" r="3.3"/>
<circle cx="1100.5" cy="401.9" r="3.3"/>
<circle cx="1100.5" cy="427.1" r="3.3"/>
<circle cx="1100.5" cy="452.3" r="3.3"/>
<circle cx="1100.5" cy="477.5" r="3.3"/>
<circle cx="1100.5" cy="502.7" r="3.3"/>
<circle cx="1100.5" cy="527.9" r="3.3"/>
<circle cx="1100.5" cy="553.1" r="3.3"/>
<circle cx="1100.5" cy="578.3" r="3.3"/>
<circle cx="1100.5" cy="603.5" r="3.3"/>
<circle cx="1100.5" cy="628.7" r="3.3"/>
<circle cx="1100.5" cy="653.9" r="3.3"/>
<circle cx="1100.5" cy="679.1" r="3.3"/>
<circle cx="1100.5" cy="704.3" r="3.3"/>
<circle cx="1100.5" cy="729.5" r="3.3"/>
<circle cx="1100.5" cy="754.7" r="3.3"/>
<circle cx="1285.5" cy="351.5" r="3.3"/>
<circle cx="1285.5" cy="376.7" r="3.3"/>
<circle cx="1285.5" cy="401.9" r="3.3"/>
<circle cx="1285.5" cy="427.1" r="3.3"/>
<circle cx="1285.5" cy="452.3" r="3.3"/>
<circle cx="1285.5" cy="477.5" r="3.3"/>
<circle cx="1285.5" cy="502.7" r="3.3"/>
<circle cx="1285.5" cy="527.9" r="3.3"/>
<circle cx="1285.5" cy="553.1" r="3.3"/>
<circle cx="1285.5" cy="578.3" r="3.3"/>
<circle cx="1285.5" cy="603.5" r="3.3"/>
<circle cx="1285.5" cy="628.7" r="3.3"/>
<circle cx="1285.5" cy="653.9" r="3.3"/>
<circle cx="1285.5" cy="679.1" r="3.3"/>
<circle cx="1285.5" cy="704.3" r="3.3"/>
<circle cx="1285.5" cy="729.5" r="3.3"/>
<circle cx="1285.5" cy="754.7" r="3.3"/>
<circle cx="1424" cy="351.5" r="3.3"/>
<circle cx="1424" cy="376.7" r="3.3"/>
<circle cx="1424" cy="401.9" r="3.3"/>
<circle cx="1424" cy="427.1" r="3.3"/>
<circle cx="1424" cy="452.3" r="3.3"/>
<circle cx="1424" cy="477.5" r="3.3"/>
<circle cx="1424" cy="502.7" r="3.3"/>
<circle cx="1424" cy="527.9" r="3.3"/>
<circle cx="1424" cy="553.1" r="3.3"/>
<circle cx="1424" cy="578.3" r="3.3"/>
<circle cx="1424" cy="603.5" r="3.3"/>
<circle cx="1424" cy="628.7" r="3.3"/>
<circle cx="1424" cy="653.9" r="3.3"/>
<circle cx="1424" cy="679.1" r="3.3"/>
<circle cx="1424" cy="704.3" r="3.3"/>
<circle cx="1424" cy="729.5" r="3.3"/>
<circle cx="1424" cy="754.7" r="3.3"/>
<rect x="1011" y="360" width="70" height="14.5" rx="7"/>
<rect x="1011" y="721.5" width="70" height="14.5" rx="7"/>
<rect x="1011" y="380" width="70" height="14.5" rx="7"/>
<rect x="1011" y="701.5" width="70" height="14.5" rx="7"/>
<path d="M1081 403H1032C1022 403 1018 410 1018 420V676C1018 686 1022 693 1032 693H1081"/>
<path d="M1081 414H1042C1034 414 1030 420 1030 428V480M1030 616V668C1030 676 1034 682 1042 682H1081"/>
<rect x="1038" y="436" width="43" height="16" rx="8"/>
<rect x="1038" y="644" width="43" height="16" rx="8"/>
<rect x="1038" y="459" width="43" height="16" rx="8"/>
<rect x="1038" y="621" width="43" height="16" rx="8"/>
<rect x="1038" y="481" width="43" height="16" rx="8"/>
<rect x="1038" y="599" width="43" height="16" rx="8"/>
<circle cx="1011" cy="423" r="5"/><circle cx="1011" cy="423" r="3.2"/><circle cx="1011" cy="478" r="5"/><circle cx="1011" cy="673" r="5"/><circle cx="1011" cy="673" r="3.2"/><circle cx="1011" cy="618" r="5"/>
<path d="M1122 349H1236M1122 354.5H1232"/>
<path d="M1122 369.5H1236M1122 375H1232"/>
<path d="M1122 390H1236M1122 395.5H1232"/>
<path d="M1122 410.5H1236M1122 416H1232"/>
<path d="M1122 431H1236M1122 436.5H1232"/>
<path d="M1122 451.5H1236M1122 457H1232"/>
<path d="M1122 472H1236M1122 477.5H1232"/>
<path d="M1122 492.5H1236M1122 498H1232"/>
<path d="M1122 513H1236M1122 518.5H1232"/>
<path d="M1122 533.5H1236M1122 539H1232"/>
<path d="M1122 554H1236M1122 559.5H1232"/>
<path d="M1122 574.5H1236M1122 580H1232"/>
<path d="M1122 595H1236M1122 600.5H1232"/>
<path d="M1122 615.5H1236M1122 621H1232"/>
<path d="M1122 636H1236M1122 641.5H1232"/>
<path d="M1122 656.5H1236M1122 662H1232"/>
<path d="M1122 677H1236M1122 682.5H1232"/>
<path d="M1122 697.5H1236M1122 703H1232"/>
<path d="M1122 718H1236M1122 723.5H1232"/>
<path d="M1122 738.5H1236M1122 744H1232"/>
<path d="M1122 343V753M1240 343V753"/>
<path d="M1226 395C1250 400 1258 420 1258 450V646C1258 676 1250 696 1226 701M1226 386C1256 392 1266 415 1266 450V646C1266 681 1256 704 1226 710"/>
<circle cx="1250" cy="409" r="4.5"/><circle cx="1250" cy="409" r="2.6"/>
<circle cx="1250" cy="444" r="4.5"/><circle cx="1250" cy="444" r="2.6"/>
<circle cx="1250" cy="492" r="4.5"/><circle cx="1250" cy="492" r="2.6"/>
<circle cx="1250" cy="604" r="4.5"/><circle cx="1250" cy="604" r="2.6"/>
<circle cx="1250" cy="652" r="4.5"/><circle cx="1250" cy="652" r="2.6"/>
<circle cx="1250" cy="687" r="4.5"/><circle cx="1250" cy="687" r="2.6"/>
<path d="M1313 364H1368V377H1320L1313 387Z"/>
<path d="M1313 732H1368V719H1320L1313 709Z"/>
<rect x="1378" y="364" width="16" height="13"/><rect x="1378" y="719" width="16" height="13"/>
<path d="M1313 400H1368V414H1320L1313 424Z"/>
<path d="M1313 696H1368V682H1320L1313 672Z"/>
<rect x="1378" y="400" width="16" height="14"/><rect x="1378" y="682" width="16" height="14"/>
<path d="M1313 434H1368V458H1320L1313 468Z"/>
<path d="M1313 662H1368V638H1320L1313 628Z"/>
<rect x="1378" y="434" width="16" height="24"/><rect x="1378" y="638" width="16" height="24"/>
<path d="M1313 476H1368V490H1320L1313 500Z"/>
<path d="M1313 620H1368V606H1320L1313 596Z"/>
<rect x="1378" y="476" width="16" height="14"/><rect x="1378" y="606" width="16" height="14"/>
<path d="M1313 505H1368V517H1320L1313 527Z"/>
<path d="M1313 591H1368V579H1320L1313 569Z"/>
<rect x="1378" y="505" width="16" height="12"/><rect x="1378" y="579" width="16" height="12"/>
<path d="M1305 355C1330 375 1350 382 1399 382M1305 741C1330 721 1350 714 1399 714"/>
<path d="M1340 548C1340 470 1380 410 1436 380M1340 548C1340 626 1380 686 1436 716M1352 548C1352 480 1390 425 1440 398M1352 548C1352 616 1390 671 1440 698"/>
<path d="M1447 436H1503M1447 660H1503"/>
<path d="M1447 448H1503M1447 648H1503"/>
<path d="M1447 460H1503M1447 636H1503"/>
<path d="M1447 472H1503M1447 624H1503"/>
<path d="M1447 484H1503M1447 612H1503"/>
<path d="M1447 496H1503M1447 600H1503"/>
<path d="M1447 508H1503M1447 588H1503"/>
<path d="M1447 520H1503M1447 576H1503"/>
<path d="M1447 532H1503M1447 564H1503"/>
<path d="M1447 544H1503M1447 552H1503"/>
<path d="M1447 430V666M1480 360L1500 330M1480 736L1500 766"/>
<path d="M1512 470h8v6h-8M1512 626h8v-6h-8"/>
<path d="M1512 490h8v6h-8M1512 606h8v-6h-8"/>
<path d="M1512 510h8v6h-8M1512 586h8v-6h-8"/>
<path d="M1512 530h8v6h-8M1512 566h8v-6h-8"/>
<path d="M1455 395H1500L1520 380M1455 701H1500L1520 716M1455 395V420H1500M1455 701V676H1500"/><rect x="602" y="489" width="196" height="120" rx="12"/>
<path d="M602 525.5H798M602 527.5H798M602 574H798M614 497V525M628 497V525M786 497V525"/>
<rect x="627" y="534" width="26.5" height="30.5" rx="4"/><ellipse cx="640.2" cy="549.5" rx="8.6" ry="9.6"/>
<rect x="671" y="534" width="26.5" height="30.5" rx="4"/><ellipse cx="684.2" cy="549.5" rx="8.6" ry="9.6"/>
<rect x="714.5" y="534" width="26.5" height="30.5" rx="4"/><ellipse cx="727.7" cy="549.5" rx="8.6" ry="9.6"/>
<rect x="757.5" y="534" width="26.5" height="30.5" rx="4"/><ellipse cx="770.7" cy="549.5" rx="8.6" ry="9.6"/>
<circle cx="640.8" cy="497.4" r="3.3"/>
<circle cx="640.8" cy="517.7" r="3.3"/>
<circle cx="771.7" cy="497.4" r="3.3"/>
<circle cx="771.7" cy="517.7" r="3.3"/>
<circle cx="607.3" cy="536.5" r="3.3"/>
<circle cx="607.3" cy="566.6" r="3.3"/>
<circle cx="704.5" cy="533" r="3.3"/>
<circle cx="704.5" cy="566.6" r="3.3"/>
<circle cx="746.6" cy="556" r="3.3"/>
<circle cx="661" cy="556" r="3.3"/>
<circle cx="640.8" cy="581" r="3.3"/>
<circle cx="640.8" cy="599" r="3.3"/>
<circle cx="771.7" cy="581" r="3.3"/>
<circle cx="771.7" cy="599" r="3.3"/>
<circle cx="792" cy="536.5" r="3.3"/>
<circle cx="792" cy="566.6" r="3.3"/>
<circle cx="620" cy="590" r="12" stroke-dasharray="3 2"/>
<path d="M600 489C590 500 590 600 600 612C604 622 612 624 620 622"/></g>
<g fill="none" stroke-linejoin="miter" stroke-linecap="butt" shape-rendering="crispEdges">
<polyline points="557.5,379.5 851.5,379.5" stroke="#b26cff" stroke-width="3"/>
<polyline points="643.5,314.5 656.5,321.5 656.5,379.5" stroke="#b26cff" stroke-width="3"/>
<polyline points="623.5,367.5 647.5,379.5" stroke="#b26cff" stroke-width="3"/>
<polyline points="602.5,400.5 623.5,400.5 648.5,379.5" stroke="#b26cff" stroke-width="3"/>
<polyline points="508.5,473.5 548.5,416.5 623.5,416.5 648.5,380.5" stroke="#b26cff" stroke-width="3"/>
<polyline points="561.5,465.5 561.5,449.5 577.5,416.5" stroke="#b26cff" stroke-width="3"/>
<polyline points="659.5,395.5 659.5,379.5" stroke="#b26cff" stroke-width="3"/>
<polyline points="704.5,367.5 704.5,379.5" stroke="#b26cff" stroke-width="3"/>
<polyline points="728.5,379.5 728.5,441.5" stroke="#b26cff" stroke-width="3"/>
<polyline points="728.5,457.5 728.5,469.5" stroke="#b26cff" stroke-width="3"/>
<polyline points="757.5,334.5 757.5,400.5" stroke="#b26cff" stroke-width="3"/>
<polyline points="806.5,371.5 806.5,400.5" stroke="#b26cff" stroke-width="3"/>
<polyline points="561.5,506.5 577.5,506.5 577.5,632.5 590.5,669.5 622.5,669.5 639.5,685.5 639.5,779.5" stroke="#cc9900" stroke-width="3"/>
<polyline points="561.5,538.5 577.5,538.5" stroke="#cc9900" stroke-width="3"/>
<polyline points="577.5,583.5 655.5,583.5" stroke="#cc9900" stroke-width="3"/>
<polyline points="508.5,612.5 577.5,612.5" stroke="#cc9900" stroke-width="3"/>
<polyline points="593.5,686.5 639.5,686.5" stroke="#cc9900" stroke-width="3"/>
<polyline points="610.5,702.5 639.5,702.5" stroke="#cc9900" stroke-width="3"/>
<polyline points="639.5,706.5 659.5,706.5" stroke="#cc9900" stroke-width="3"/>
<polyline points="557.5,718.5 851.5,718.5" stroke="#cc9900" stroke-width="3"/>
<polyline points="720.5,677.5 720.5,718.5" stroke="#cc9900" stroke-width="3"/>
<polyline points="773.5,689.5 773.5,718.5" stroke="#cc9900" stroke-width="3"/>
<polyline points="822.5,698.5 822.5,718.5" stroke="#cc9900" stroke-width="3"/>
<polyline points="757.5,718.5 757.5,747.5" stroke="#cc9900" stroke-width="3"/>
<polyline points="798.5,718.5 798.5,730.5" stroke="#cc9900" stroke-width="3"/>
<polyline points="695.5,673.5 704.5,673.5" stroke="#5a9a5a" stroke-width="2"/>
<polyline points="929.5,339.5 888.5,339.5 888.5,759.5" stroke="#0a92ff" stroke-width="3"/>
<polyline points="871.5,759.5 946.5,759.5" stroke="#0a92ff" stroke-width="3"/>
<polyline points="875.5,351.5 888.5,351.5" stroke="#0a92ff" stroke-width="3"/>
<polyline points="888.5,355.5 912.5,355.5" stroke="#0a92ff" stroke-width="3"/>
<polyline points="888.5,367.5 961.5,367.5" stroke="#0a92ff" stroke-width="3"/>
<polyline points="888.5,371.5 961.5,371.5" stroke="#0a92ff" stroke-width="3"/>
<polyline points="948.5,359.5 961.5,359.5" stroke="#0a92ff" stroke-width="3"/>
<polyline points="948.5,363.5 961.5,363.5" stroke="#0a92ff" stroke-width="3"/>
<polyline points="948.5,375.5 961.5,375.5" stroke="#0a92ff" stroke-width="3"/>
<polyline points="949.5,358.5 949.5,376.5" stroke="#0a92ff" stroke-width="3"/>
<polyline points="867.5,379.5 888.5,379.5" stroke="#0a92ff" stroke-width="3"/>
<polyline points="888.5,383.5 912.5,383.5" stroke="#0a92ff" stroke-width="3"/>
<polyline points="888.5,388.5 912.5,388.5" stroke="#0a92ff" stroke-width="3"/>
<polyline points="888.5,392.5 851.5,392.5 851.5,404.5" stroke="#0a92ff" stroke-width="3"/>
<polyline points="867.5,392.5 867.5,404.5" stroke="#0a92ff" stroke-width="3"/>
<polyline points="888.5,412.5 912.5,412.5" stroke="#0a92ff" stroke-width="3"/>
<polyline points="875.5,444.5 888.5,444.5" stroke="#0a92ff" stroke-width="3"/>
<polyline points="875.5,448.5 888.5,448.5" stroke="#0a92ff" stroke-width="3"/>
<polyline points="888.5,441.5 912.5,441.5" stroke="#0a92ff" stroke-width="3"/>
<polyline points="891.5,465.5 895.5,461.5 912.5,461.5" stroke="#0a92ff" stroke-width="3"/>
<polyline points="891.5,465.5 895.5,465.5 912.5,465.5" stroke="#0a92ff" stroke-width="3"/>
<polyline points="891.5,465.5 895.5,469.5 912.5,469.5" stroke="#0a92ff" stroke-width="3"/>
<polyline points="888.5,493.5 916.5,493.5" stroke="#0a92ff" stroke-width="3"/>
<polyline points="888.5,497.5 916.5,497.5" stroke="#0a92ff" stroke-width="3"/>
<polyline points="1002.5,506.5 1002.5,526.5" stroke="#0a92ff" stroke-width="3"/>
<polyline points="1047.5,497.5 1047.5,552.5 1079.5,552.5" stroke="#0a92ff" stroke-width="3"/>
<polyline points="1047.5,510.5 1079.5,510.5" stroke="#0a92ff" stroke-width="3"/>
<polyline points="888.5,526.5 1089.5,526.5" stroke="#0a92ff" stroke-width="3"/>
<polyline points="889.5,527.5 896.5,538.5 991.5,538.5 991.5,546.5" stroke="#0a92ff" stroke-width="3"/>
<polyline points="928.5,538.5 928.5,555.5 945.5,555.5" stroke="#0a92ff" stroke-width="3"/>
<polyline points="867.5,555.5 888.5,555.5" stroke="#0a92ff" stroke-width="3"/>
<polyline points="867.5,579.5 888.5,579.5" stroke="#0a92ff" stroke-width="3"/>
<polyline points="1018.5,526.5 1018.5,587.5" stroke="#0a92ff" stroke-width="3"/>
<polyline points="1026.5,526.5 1026.5,587.5" stroke="#0a92ff" stroke-width="3"/>
<polyline points="888.5,596.5 934.5,596.5 953.5,608.5" stroke="#0a92ff" stroke-width="3"/>
<polyline points="888.5,612.5 912.5,612.5" stroke="#0a92ff" stroke-width="3"/>
<polyline points="888.5,641.5 912.5,641.5" stroke="#0a92ff" stroke-width="3"/>
<polyline points="888.5,649.5 912.5,649.5" stroke="#0a92ff" stroke-width="3"/>
<polyline points="888.5,637.5 851.5,637.5 851.5,653.5" stroke="#0a92ff" stroke-width="3"/>
<polyline points="867.5,637.5 867.5,653.5" stroke="#0a92ff" stroke-width="3"/>
<polyline points="888.5,665.5 945.5,665.5" stroke="#0a92ff" stroke-width="3"/>
<polyline points="888.5,677.5 912.5,677.5" stroke="#0a92ff" stroke-width="3"/>
<polyline points="888.5,702.5 912.5,702.5" stroke="#0a92ff" stroke-width="3"/>
<polyline points="948.5,706.5 961.5,706.5" stroke="#0a92ff" stroke-width="3"/>
<polyline points="948.5,710.5 961.5,710.5" stroke="#0a92ff" stroke-width="3"/>
<polyline points="948.5,714.5 961.5,714.5" stroke="#0a92ff" stroke-width="3"/>
<polyline points="948.5,718.5 961.5,718.5" stroke="#0a92ff" stroke-width="3"/>
<polyline points="949.5,705.5 949.5,722.5" stroke="#0a92ff" stroke-width="3"/>
<polyline points="888.5,722.5 961.5,722.5" stroke="#0a92ff" stroke-width="3"/>
<polyline points="888.5,726.5 961.5,726.5" stroke="#0a92ff" stroke-width="3"/>
<polyline points="867.5,718.5 888.5,718.5" stroke="#0a92ff" stroke-width="3"/>
<polyline points="891.5,738.5 895.5,734.5 912.5,734.5" stroke="#0a92ff" stroke-width="3"/>
<polyline points="891.5,738.5 895.5,738.5 912.5,738.5" stroke="#0a92ff" stroke-width="3"/>
<polyline points="891.5,738.5 895.5,742.5 912.5,742.5" stroke="#0a92ff" stroke-width="3"/>
<polyline points="843.5,306.5 843.5,317.5 896.5,317.5" stroke="#5a0f9c" stroke-width="3"/>
<polyline points="863.5,306.5 843.5,317.5" stroke="#5a0f9c" stroke-width="3"/>
<polyline points="905.5,784.5 871.5,784.5 871.5,796.5" stroke="#5a0f9c" stroke-width="3"/>
<polyline points="871.5,784.5 883.5,796.5" stroke="#5a0f9c" stroke-width="3"/>
<polyline points="871.5,781.5 871.5,785.5" stroke="#5a0f9c" stroke-width="3"/>
<polyline points="912.5,317.5 928.5,305.5 972.5,284.5 1014.5,269.5 1067.5,241.5 1127.5,208.5 1177.5,192.5" stroke="#00cc00" stroke-width="3"/>
<polyline points="928.5,307.5 928.5,323.5" stroke="#1a7a2a" stroke-width="2"/>
<polyline points="920.5,285.5 972.5,284.5" stroke="#00cc00" stroke-width="3"/>
<polyline points="932.5,261.5 972.5,284.5" stroke="#00cc00" stroke-width="3"/>
<polyline points="969.5,240.5 1014.5,269.5" stroke="#00cc00" stroke-width="3"/>
<polyline points="1022.5,232.5 1016.5,256.5 1014.5,269.5 1018.5,285.5 1018.5,302.5" stroke="#00cc00" stroke-width="3"/>
<polyline points="1038.5,285.5 1018.5,285.5" stroke="#00cc00" stroke-width="3"/>
<polyline points="973.5,314.5 973.5,284.5" stroke="#00cc00" stroke-width="3"/>
<polyline points="1067.5,208.5 1067.5,241.5" stroke="#00cc00" stroke-width="3"/>
<polyline points="1042.5,251.5 1046.5,265.5" stroke="#00cc00" stroke-width="3"/>
<polyline points="1132.5,244.5 1067.5,241.5" stroke="#00cc00" stroke-width="3"/>
<polyline points="1108.5,261.5 1067.5,241.5" stroke="#00cc00" stroke-width="3"/>
<polyline points="1092.5,277.5 1067.5,241.5" stroke="#00cc00" stroke-width="3"/>
<polyline points="1124.5,187.5 1127.5,208.5" stroke="#00cc00" stroke-width="3"/>
<polyline points="1161.5,216.5 1127.5,208.5" stroke="#00cc00" stroke-width="3"/>
<polyline points="920.5,784.5 944.5,787.5 989.5,816.5 1022.5,832.5 1085.5,861.5 1168.5,898.5 1198.5,906.5" stroke="#00b840" stroke-width="3"/>
<polyline points="945.5,775.5 945.5,792.5" stroke="#1a7a2a" stroke-width="2"/>
<polyline points="986.5,796.5 988.5,816.5" stroke="#00b840" stroke-width="3"/>
<polyline points="945.5,816.5 989.5,816.5" stroke="#00b840" stroke-width="3"/>
<polyline points="961.5,836.5 989.5,816.5" stroke="#00b840" stroke-width="3"/>
<polyline points="1026.5,804.5 1025.5,816.5 1022.5,832.5" stroke="#00b840" stroke-width="3"/>
<polyline points="1042.5,816.5 1025.5,816.5" stroke="#00b840" stroke-width="3"/>
<polyline points="989.5,849.5 1022.5,832.5" stroke="#00b840" stroke-width="3"/>
<polyline points="1038.5,865.5 1022.5,832.5" stroke="#00b840" stroke-width="3"/>
<polyline points="1100.5,828.5 1085.5,861.5" stroke="#00b840" stroke-width="3"/>
<polyline points="1087.5,877.5 1085.5,861.5" stroke="#00b840" stroke-width="3"/>
<polyline points="1132.5,841.5 1085.5,861.5" stroke="#00b840" stroke-width="3"/>
<polyline points="1145.5,861.5 1085.5,861.5" stroke="#00b840" stroke-width="3"/>
<polyline points="1198.5,885.5 1168.5,898.5" stroke="#00b840" stroke-width="3"/>
<polyline points="1153.5,910.5 1168.5,898.5" stroke="#00b840" stroke-width="3"/>
<polyline points="1075.5,355.5 1075.5,379.5 1206.5,379.5" stroke="#bbb000" stroke-width="3"/>
<polyline points="1083.5,355.5 1083.5,379.5" stroke="#bbb000" stroke-width="3"/>
<polyline points="1169.5,359.5 1169.5,379.5" stroke="#bbb000" stroke-width="3"/>
<polyline points="1206.5,363.5 1206.5,735.5" stroke="#bbb000" stroke-width="3"/>
<polyline points="1206.5,347.5 1206.5,321.5 1319.5,259.5 1324.5,257.5" stroke="#ee82ee" stroke-width="3"/>
<polyline points="1206.5,751.5 1206.5,771.5 1344.5,839.5" stroke="#ee82ee" stroke-width="3"/>
<polyline points="1104.5,526.5 1569.5,526.5" stroke="#bbb000" stroke-width="3"/>
<polyline points="1243.5,526.5 1243.5,542.5" stroke="#bbb000" stroke-width="3"/>
<polyline points="1055.5,751.5 1055.5,726.5 1206.5,726.5" stroke="#bbb000" stroke-width="3"/>
<polyline points="1084.5,751.5 1084.5,726.5" stroke="#bbb000" stroke-width="3"/>
<polyline points="1153.5,726.5 1153.5,738.5" stroke="#bbb000" stroke-width="3"/>
<polyline points="1504.5,351.5 1504.5,738.5" stroke="#bbb000" stroke-width="3"/>
<polyline points="1435.5,363.5 1435.5,392.5 1503.5,405.5" stroke="#bbb000" stroke-width="3"/>
<polyline points="1471.5,351.5 1471.5,388.5 1503.5,402.5" stroke="#bbb000" stroke-width="3"/>
<polyline points="1532.5,351.5 1505.5,369.5" stroke="#bbb000" stroke-width="3"/>
<polyline points="1504.5,371.5 1520.5,371.5" stroke="#bbb000" stroke-width="3"/>
<polyline points="1504.5,379.5 1520.5,379.5" stroke="#bbb000" stroke-width="3"/>
<polyline points="1504.5,387.5 1520.5,387.5" stroke="#bbb000" stroke-width="3"/>
<polyline points="1565.5,371.5 1557.5,374.5 1557.5,473.5" stroke="#bbb000" stroke-width="3"/>
<polyline points="1504.5,405.5 1530.5,405.5 1529.5,412.5" stroke="#bbb000" stroke-width="3"/>
<polyline points="1455.5,420.5 1504.5,420.5" stroke="#bbb000" stroke-width="3"/>
<polyline points="1504.5,473.5 1573.5,473.5" stroke="#bbb000" stroke-width="3"/>
<polyline points="1524.5,514.5 1524.5,526.5" stroke="#bbb000" stroke-width="3"/>
<polyline points="1524.5,527.5 1541.5,542.5" stroke="#bbb000" stroke-width="3"/>
<polyline points="1504.5,604.5 1573.5,604.5" stroke="#bbb000" stroke-width="3"/>
<polyline points="1561.5,604.5 1561.5,702.5 1569.5,710.5" stroke="#bbb000" stroke-width="3"/>
<polyline points="1504.5,636.5 1528.5,636.5" stroke="#bbb000" stroke-width="3"/>
<polyline points="1459.5,689.5 1528.5,689.5" stroke="#bbb000" stroke-width="3"/>
<polyline points="1447.5,714.5 1528.5,714.5" stroke="#bbb000" stroke-width="3"/>
<polyline points="1528.5,706.5 1516.5,706.5 1516.5,722.5 1528.5,722.5" stroke="#bbb000" stroke-width="3"/>
<polyline points="1447.5,742.5 1467.5,742.5 1502.5,714.5" stroke="#bbb000" stroke-width="3"/>
<polyline points="1505.5,714.5 1532.5,738.5" stroke="#bbb000" stroke-width="3"/>
</g>
<path d="M725 449.25V444.75A3.75 3.75 0 0 1 732.5 444.75V449.25Z" fill="#fff" stroke="#0a6ae0" stroke-width="1.1"/>
<path d="M725 449.25V453.75A3.75 3.75 0 0 0 732.5 453.75V449.25Z" fill="#fff" stroke="#d75f00" stroke-width="1.1"/>
<path d="M859.5 376H855.5A4 4 0 0 0 855.5 384H859.5Z" fill="#fff" stroke="#d75f00" stroke-width="1.1"/>
<path d="M859.5 376H863.5A4 4 0 0 1 863.5 384H859.5Z" fill="#fff" stroke="#0a6ae0" stroke-width="1.1"/>
<path d="M859.5 714.5H855.5A4 4 0 0 0 855.5 722.5H859.5Z" fill="#fff" stroke="#0a6ae0" stroke-width="1.1"/>
<path d="M859.5 714.5H863.5A4 4 0 0 1 863.5 722.5H859.5Z" fill="#fff" stroke="#d75f00" stroke-width="1.1"/>
<path d="M1096.75 522.5H1093.25A4.25 4.25 0 0 0 1093.25 531H1096.75Z" fill="#fff" stroke="#0a6ae0" stroke-width="1.1"/>
<path d="M1096.75 522.5H1100.25A4.25 4.25 0 0 1 1100.25 531H1096.75Z" fill="#fff" stroke="#d75f00" stroke-width="1.1"/>
<path d="M904.5 314H900.75A4.25 4.25 0 0 0 900.75 322.5H904.5Z" fill="#fff" stroke="#0a6ae0" stroke-width="1.1"/>
<path d="M904.5 314H908.25A4.25 4.25 0 0 1 908.25 322.5H904.5Z" fill="#fff" stroke="#d75f00" stroke-width="1.1"/>
<path d="M925 331.25V327.25A4.25 4.25 0 0 1 933.5 327.25V331.25Z" fill="#fff" stroke="#d75f00" stroke-width="1.1"/>
<path d="M925 331.25V335.25A4.25 4.25 0 0 0 933.5 335.25V331.25Z" fill="#fff" stroke="#0a6ae0" stroke-width="1.1"/>
<path d="M941.5 767.5V763.5A4 4 0 0 1 949.5 763.5V767.5Z" fill="#fff" stroke="#d75f00" stroke-width="1.1"/>
<path d="M941.5 767.5V771.5A4 4 0 0 0 949.5 771.5V767.5Z" fill="#fff" stroke="#0a6ae0" stroke-width="1.1"/>
<path d="M913 780.5H909.5A4 4 0 0 0 909.5 788.5H913Z" fill="#fff" stroke="#d75f00" stroke-width="1.1"/>
<path d="M913 780.5H916.5A4 4 0 0 1 916.5 788.5H913Z" fill="#fff" stroke="#0a6ae0" stroke-width="1.1"/>
<path d="M1202.5 355.5V351.5A4 4 0 0 1 1210.5 351.5V355.5Z" fill="#fff" stroke="#0a6ae0" stroke-width="1.1"/>
<path d="M1202.5 355.5V359.5A4 4 0 0 0 1210.5 359.5V355.5Z" fill="#fff" stroke="#d75f00" stroke-width="1.1"/>
<path d="M1202.5 743.5V739.5A4 4 0 0 1 1210.5 739.5V743.5Z" fill="#fff" stroke="#d75f00" stroke-width="1.1"/>
<path d="M1202.5 743.5V747.5A4 4 0 0 0 1210.5 747.5V743.5Z" fill="#fff" stroke="#0a6ae0" stroke-width="1.1"/>
<rect x="1043.5" y="265" width="11" height="6.5" fill="#2a9090"/><rect x="1040.5" y="269" width="18" height="4.5" fill="none" stroke="#2a9898" stroke-width=".8"/>
<g fill="#f0f0f0" stroke="#000" stroke-width="1">
<rect x="626" y="302.5" width="17" height="12"/>
<rect x="540.5" y="371.5" width="17" height="12"/>
<rect x="606.5" y="363.5" width="16.5" height="8"/>
<rect x="585.5" y="395.5" width="17" height="9"/>
<rect x="651.5" y="395.5" width="16" height="13"/>
<rect x="695.5" y="342.5" width="41" height="25"/>
<rect x="753.5" y="322.5" width="20" height="12"/>
<rect x="785.5" y="342.5" width="37" height="29"/>
<rect x="753.5" y="400.5" width="16" height="12"/>
<rect x="785.5" y="400.5" width="37" height="20"/>
<rect x="724.5" y="469.5" width="8" height="8"/>
<rect x="557.5" y="465.5" width="20" height="12"/>
<rect x="491.5" y="473.5" width="17" height="12"/>
<rect x="548.5" y="493.5" width="13" height="21"/>
<rect x="548.5" y="526.5" width="13" height="25"/>
<rect x="655.5" y="567.5" width="20" height="20"/>
<rect x="491.5" y="604.5" width="17" height="12"/>
<rect x="577.5" y="681.5" width="16" height="8"/>
<rect x="593.5" y="698.5" width="17" height="8"/>
<rect x="659.5" y="702.5" width="16" height="8"/>
<rect x="540.5" y="714.5" width="17" height="12"/>
<rect x="679.5" y="665.5" width="16" height="12"/>
<rect x="704.5" y="649.5" width="53" height="28"/>
<rect x="769.5" y="681.5" width="12" height="8"/>
<rect x="802.5" y="673.5" width="36" height="25"/>
<rect x="740.5" y="747.5" width="29" height="20"/>
<rect x="785.5" y="730.5" width="29" height="25"/>
<rect x="626.5" y="779.5" width="16" height="12"/>
<rect x="855.5" y="342.5" width="20" height="17"/>
<rect x="912.5" y="346.5" width="16" height="17"/>
<rect x="961.5" y="346.5" width="12" height="41"/>
<rect x="912.5" y="375.5" width="16" height="20"/>
<rect x="847.5" y="404.5" width="28" height="16"/>
<rect x="912.5" y="404.5" width="16" height="16"/>
<rect x="851.5" y="432.5" width="24" height="25"/>
<rect x="912.5" y="429.5" width="16" height="20"/>
<rect x="912.5" y="457.5" width="16" height="16"/>
<rect x="916.5" y="481.5" width="24" height="33"/>
<rect x="989.5" y="481.5" width="21" height="25"/>
<rect x="1042.5" y="485.5" width="13" height="12"/>
<rect x="1079.5" y="489.5" width="33" height="25"/>
<rect x="945.5" y="546.5" width="28" height="36"/>
<rect x="981.5" y="546.5" width="25" height="36"/>
<rect x="855.5" y="546.5" width="12" height="13"/>
<rect x="855.5" y="571.5" width="12" height="12"/>
<rect x="1014.5" y="587.5" width="131" height="62"/>
<rect x="1079.5" y="538.5" width="33" height="29"/>
<rect x="953.5" y="600.5" width="20" height="24"/>
<rect x="912.5" y="604.5" width="16" height="16"/>
<rect x="912.5" y="632.5" width="16" height="21"/>
<rect x="847.5" y="653.5" width="28" height="16"/>
<rect x="945.5" y="661.5" width="24" height="20"/>
<rect x="912.5" y="665.5" width="16" height="20"/>
<rect x="912.5" y="693.5" width="16" height="17"/>
<rect x="961.5" y="693.5" width="12" height="41"/>
<rect x="912.5" y="730.5" width="16" height="17"/>
<rect x="851.5" y="751.5" width="20" height="16"/>
<rect x="838.5" y="297.5" width="33" height="9"/>
<rect x="863.5" y="796.5" width="33" height="8"/>
<rect x="896.5" y="281.5" width="24" height="8"/>
<rect x="924.5" y="253.5" width="21" height="8"/>
<rect x="961.5" y="232.5" width="20" height="8"/>
<rect x="1014.5" y="224.5" width="20" height="8"/>
<rect x="1038.5" y="281.5" width="21" height="8"/>
<rect x="1006.5" y="302.5" width="20" height="8"/>
<rect x="969.5" y="314.5" width="20" height="8"/>
<rect x="1059.5" y="199.5" width="20" height="9"/>
<rect x="1132.5" y="240.5" width="21" height="8"/>
<rect x="1108.5" y="257.5" width="20" height="8"/>
<rect x="1083.5" y="277.5" width="21" height="8"/>
<rect x="1112.5" y="179.5" width="20" height="8"/>
<rect x="1157.5" y="216.5" width="16" height="8"/>
<rect x="1177.5" y="187.5" width="21" height="8"/>
<rect x="977.5" y="787.5" width="21" height="9"/>
<rect x="920.5" y="812.5" width="25" height="8"/>
<rect x="940.5" y="832.5" width="21" height="8"/>
<rect x="1014.5" y="796.5" width="20" height="8"/>
<rect x="1042.5" y="812.5" width="21" height="8"/>
<rect x="981.5" y="849.5" width="21" height="8"/>
<rect x="1022.5" y="865.5" width="29" height="8"/>
<rect x="1091.5" y="820.5" width="21" height="8"/>
<rect x="1071.5" y="877.5" width="20" height="8"/>
<rect x="1132.5" y="836.5" width="21" height="9"/>
<rect x="1145.5" y="857.5" width="20" height="8"/>
<rect x="1189.5" y="873.5" width="17" height="12"/>
<rect x="1198.5" y="902.5" width="20" height="8"/>
<rect x="1145.5" y="910.5" width="20" height="8"/>
<rect x="1047.5" y="330.5" width="49" height="25"/>
<rect x="1161.5" y="342.5" width="16" height="17"/>
<rect x="1316.5" y="248.5" width="16" height="9"/>
<rect x="1336.5" y="840.5" width="21" height="9"/>
<rect x="1234.5" y="542.5" width="25" height="17"/>
<rect x="1051.5" y="751.5" width="40" height="20"/>
<rect x="1149.5" y="738.5" width="16" height="16"/>
<rect x="1426.5" y="346.5" width="21" height="17"/>
<rect x="1459.5" y="334.5" width="24" height="17"/>
<rect x="1496.5" y="334.5" width="20" height="17"/>
<rect x="1532.5" y="338.5" width="17" height="17"/>
<rect x="1520.5" y="367.5" width="16" height="24"/>
<rect x="1565.5" y="363.5" width="16" height="12"/>
<rect x="1520.5" y="412.5" width="12" height="12"/>
<rect x="1439.5" y="416.5" width="16" height="8"/>
<rect x="1573.5" y="465.5" width="17" height="12"/>
<rect x="1516.5" y="502.5" width="12" height="12"/>
<rect x="1569.5" y="514.5" width="8" height="24"/>
<rect x="1536.5" y="542.5" width="9" height="13"/>
<rect x="1573.5" y="595.5" width="17" height="13"/>
<rect x="1569.5" y="706.5" width="16" height="12"/>
<rect x="1528.5" y="624.5" width="13" height="25"/>
<rect x="1528.5" y="681.5" width="13" height="12"/>
<rect x="1439.5" y="685.5" width="20" height="8"/>
<rect x="1528.5" y="702.5" width="17" height="24"/>
<rect x="1422.5" y="710.5" width="25" height="16"/>
<rect x="1422.5" y="738.5" width="25" height="17"/>
<rect x="1488.5" y="738.5" width="24" height="17"/>
<rect x="1532.5" y="734.5" width="17" height="17"/>
</g>
<g fill="#e8eef8" stroke="#2a4a7a" stroke-width=".5">
<circle cx="557.5" cy="379.5" r="1"/>
<circle cx="643.5" cy="314.5" r="1"/>
<circle cx="623.5" cy="367.5" r="1"/>
<circle cx="602.5" cy="400.5" r="1"/>
<circle cx="508.5" cy="473.5" r="1"/>
<circle cx="561.5" cy="465.5" r="1"/>
<circle cx="659.5" cy="395.5" r="1"/>
<circle cx="704.5" cy="367.5" r="1"/>
<circle cx="728.5" cy="469.5" r="1"/>
<circle cx="757.5" cy="334.5" r="1"/>
<circle cx="757.5" cy="400.5" r="1"/>
<circle cx="806.5" cy="371.5" r="1"/>
<circle cx="806.5" cy="400.5" r="1"/>
<circle cx="561.5" cy="506.5" r="1"/>
<circle cx="639.5" cy="779.5" r="1"/>
<circle cx="561.5" cy="538.5" r="1"/>
<circle cx="655.5" cy="583.5" r="1"/>
<circle cx="508.5" cy="612.5" r="1"/>
<circle cx="593.5" cy="686.5" r="1"/>
<circle cx="610.5" cy="702.5" r="1"/>
<circle cx="659.5" cy="706.5" r="1"/>
<circle cx="557.5" cy="718.5" r="1"/>
<circle cx="720.5" cy="677.5" r="1"/>
<circle cx="773.5" cy="689.5" r="1"/>
<circle cx="822.5" cy="698.5" r="1"/>
<circle cx="757.5" cy="747.5" r="1"/>
<circle cx="798.5" cy="730.5" r="1"/>
<circle cx="695.5" cy="673.5" r="1"/>
<circle cx="704.5" cy="673.5" r="1"/>
<circle cx="871.5" cy="759.5" r="1"/>
<circle cx="875.5" cy="351.5" r="1"/>
<circle cx="912.5" cy="355.5" r="1"/>
<circle cx="961.5" cy="367.5" r="1"/>
<circle cx="961.5" cy="371.5" r="1"/>
<circle cx="961.5" cy="359.5" r="1"/>
<circle cx="961.5" cy="363.5" r="1"/>
<circle cx="961.5" cy="375.5" r="1"/>
<circle cx="912.5" cy="383.5" r="1"/>
<circle cx="912.5" cy="388.5" r="1"/>
<circle cx="851.5" cy="404.5" r="1"/>
<circle cx="867.5" cy="404.5" r="1"/>
<circle cx="912.5" cy="412.5" r="1"/>
<circle cx="875.5" cy="444.5" r="1"/>
<circle cx="875.5" cy="448.5" r="1"/>
<circle cx="912.5" cy="441.5" r="1"/>
<circle cx="912.5" cy="461.5" r="1"/>
<circle cx="912.5" cy="465.5" r="1"/>
<circle cx="912.5" cy="469.5" r="1"/>
<circle cx="916.5" cy="493.5" r="1"/>
<circle cx="916.5" cy="497.5" r="1"/>
<circle cx="1002.5" cy="506.5" r="1"/>
<circle cx="1047.5" cy="497.5" r="1"/>
<circle cx="1079.5" cy="552.5" r="1"/>
<circle cx="1079.5" cy="510.5" r="1"/>
<circle cx="991.5" cy="546.5" r="1"/>
<circle cx="945.5" cy="555.5" r="1"/>
<circle cx="867.5" cy="555.5" r="1"/>
<circle cx="867.5" cy="579.5" r="1"/>
<circle cx="1018.5" cy="587.5" r="1"/>
<circle cx="1026.5" cy="587.5" r="1"/>
<circle cx="953.5" cy="608.5" r="1"/>
<circle cx="912.5" cy="612.5" r="1"/>
<circle cx="912.5" cy="641.5" r="1"/>
<circle cx="912.5" cy="649.5" r="1"/>
<circle cx="851.5" cy="653.5" r="1"/>
<circle cx="867.5" cy="653.5" r="1"/>
<circle cx="945.5" cy="665.5" r="1"/>
<circle cx="912.5" cy="677.5" r="1"/>
<circle cx="912.5" cy="702.5" r="1"/>
<circle cx="961.5" cy="706.5" r="1"/>
<circle cx="961.5" cy="710.5" r="1"/>
<circle cx="961.5" cy="714.5" r="1"/>
<circle cx="961.5" cy="718.5" r="1"/>
<circle cx="961.5" cy="722.5" r="1"/>
<circle cx="961.5" cy="726.5" r="1"/>
<circle cx="912.5" cy="734.5" r="1"/>
<circle cx="912.5" cy="738.5" r="1"/>
<circle cx="912.5" cy="742.5" r="1"/>
<circle cx="843.5" cy="306.5" r="1"/>
<circle cx="863.5" cy="306.5" r="1"/>
<circle cx="871.5" cy="796.5" r="1"/>
<circle cx="883.5" cy="796.5" r="1"/>
<circle cx="1177.5" cy="192.5" r="1"/>
<circle cx="920.5" cy="285.5" r="1"/>
<circle cx="932.5" cy="261.5" r="1"/>
<circle cx="969.5" cy="240.5" r="1"/>
<circle cx="1022.5" cy="232.5" r="1"/>
<circle cx="1018.5" cy="302.5" r="1"/>
<circle cx="1038.5" cy="285.5" r="1"/>
<circle cx="973.5" cy="314.5" r="1"/>
<circle cx="1067.5" cy="208.5" r="1"/>
<circle cx="1132.5" cy="244.5" r="1"/>
<circle cx="1108.5" cy="261.5" r="1"/>
<circle cx="1092.5" cy="277.5" r="1"/>
<circle cx="1124.5" cy="187.5" r="1"/>
<circle cx="1161.5" cy="216.5" r="1"/>
<circle cx="1198.5" cy="906.5" r="1"/>
<circle cx="986.5" cy="796.5" r="1"/>
<circle cx="945.5" cy="816.5" r="1"/>
<circle cx="961.5" cy="836.5" r="1"/>
<circle cx="1026.5" cy="804.5" r="1"/>
<circle cx="1042.5" cy="816.5" r="1"/>
<circle cx="989.5" cy="849.5" r="1"/>
<circle cx="1038.5" cy="865.5" r="1"/>
<circle cx="1100.5" cy="828.5" r="1"/>
<circle cx="1087.5" cy="877.5" r="1"/>
<circle cx="1132.5" cy="841.5" r="1"/>
<circle cx="1145.5" cy="861.5" r="1"/>
<circle cx="1198.5" cy="885.5" r="1"/>
<circle cx="1153.5" cy="910.5" r="1"/>
<circle cx="1075.5" cy="355.5" r="1"/>
<circle cx="1083.5" cy="355.5" r="1"/>
<circle cx="1169.5" cy="359.5" r="1"/>
<circle cx="1324.5" cy="257.5" r="1"/>
<circle cx="1344.5" cy="839.5" r="1"/>
<circle cx="1569.5" cy="526.5" r="1"/>
<circle cx="1243.5" cy="542.5" r="1"/>
<circle cx="1055.5" cy="751.5" r="1"/>
<circle cx="1084.5" cy="751.5" r="1"/>
<circle cx="1153.5" cy="738.5" r="1"/>
<circle cx="1504.5" cy="351.5" r="1"/>
<circle cx="1504.5" cy="738.5" r="1"/>
<circle cx="1435.5" cy="363.5" r="1"/>
<circle cx="1471.5" cy="351.5" r="1"/>
<circle cx="1532.5" cy="351.5" r="1"/>
<circle cx="1520.5" cy="371.5" r="1"/>
<circle cx="1520.5" cy="379.5" r="1"/>
<circle cx="1520.5" cy="387.5" r="1"/>
<circle cx="1565.5" cy="371.5" r="1"/>
<circle cx="1529.5" cy="412.5" r="1"/>
<circle cx="1455.5" cy="420.5" r="1"/>
<circle cx="1573.5" cy="473.5" r="1"/>
<circle cx="1524.5" cy="514.5" r="1"/>
<circle cx="1541.5" cy="542.5" r="1"/>
<circle cx="1573.5" cy="604.5" r="1"/>
<circle cx="1569.5" cy="710.5" r="1"/>
<circle cx="1528.5" cy="636.5" r="1"/>
<circle cx="1459.5" cy="689.5" r="1"/>
<circle cx="1528.5" cy="689.5" r="1"/>
<circle cx="1447.5" cy="714.5" r="1"/>
<circle cx="1528.5" cy="714.5" r="1"/>
<circle cx="1528.5" cy="706.5" r="1"/>
<circle cx="1528.5" cy="722.5" r="1"/>
<circle cx="1447.5" cy="742.5" r="1"/>
<circle cx="1532.5" cy="738.5" r="1"/>
</g>
<g font-size="3.4" fill="#555">
<text x="555.7" y="380.7" text-anchor="end">P101</text>
<text x="641.7" y="315.7" text-anchor="end">P102</text>
<text x="621.7" y="368.7" text-anchor="end">P103</text>
<text x="600.7" y="401.7" text-anchor="end">P104</text>
<text x="506.7" y="474.7" text-anchor="end">P105</text>
<text x="561.5" y="469.7" text-anchor="middle">P106</text>
<text x="659.5" y="399.7" text-anchor="middle">P107</text>
<text x="704.5" y="365.9" text-anchor="middle">P108</text>
<text x="728.5" y="473.7" text-anchor="middle">P109</text>
<text x="757.5" y="332.9" text-anchor="middle">P110</text>
<text x="757.5" y="404.7" text-anchor="middle">P111</text>
<text x="806.5" y="369.9" text-anchor="middle">P112</text>
<text x="806.5" y="404.7" text-anchor="middle">P113</text>
<text x="559.7" y="507.7" text-anchor="end">P114</text>
<text x="639.5" y="783.7" text-anchor="middle">P115</text>
<text x="559.7" y="539.7" text-anchor="end">P116</text>
<text x="657.3" y="584.7">P117</text>
<text x="506.7" y="613.7" text-anchor="end">P118</text>
<text x="591.7" y="687.7" text-anchor="end">P119</text>
<text x="608.7" y="703.7" text-anchor="end">P120</text>
<text x="661.3" y="707.7">P121</text>
<text x="555.7" y="719.7" text-anchor="end">P122</text>
<text x="720.5" y="675.9" text-anchor="middle">P123</text>
<text x="773.5" y="687.9" text-anchor="middle">P124</text>
<text x="822.5" y="696.9" text-anchor="middle">P125</text>
<text x="757.5" y="751.7" text-anchor="middle">P126</text>
<text x="798.5" y="734.7" text-anchor="middle">P127</text>
<text x="693.7" y="674.7" text-anchor="end">P128</text>
<text x="706.3" y="674.7">P129</text>
<text x="869.7" y="760.7" text-anchor="end">P130</text>
<text x="873.7" y="352.7" text-anchor="end">P131</text>
<text x="914.3" y="356.7">P132</text>
<text x="963.3" y="368.7">P133</text>
<text x="963.3" y="372.7">P134</text>
<text x="963.3" y="360.7">P135</text>
<text x="963.3" y="364.7">P136</text>
<text x="963.3" y="376.7">P137</text>
<text x="914.3" y="384.7">P138</text>
<text x="914.3" y="389.7">P139</text>
<text x="851.5" y="408.7" text-anchor="middle">P140</text>
<text x="867.5" y="408.7" text-anchor="middle">P141</text>
<text x="914.3" y="413.7">P142</text>
<text x="873.7" y="445.7" text-anchor="end">P143</text>
<text x="873.7" y="449.7" text-anchor="end">P144</text>
<text x="914.3" y="442.7">P145</text>
<text x="914.3" y="462.7">P146</text>
<text x="914.3" y="466.7">P147</text>
<text x="914.3" y="470.7">P148</text>
<text x="918.3" y="494.7">P149</text>
<text x="918.3" y="498.7">P150</text>
<text x="1002.5" y="504.9" text-anchor="middle">P151</text>
<text x="1047.5" y="495.9" text-anchor="middle">P152</text>
<text x="1081.3" y="553.7">P153</text>
<text x="1081.3" y="511.7">P154</text>
<text x="991.5" y="550.7" text-anchor="middle">P155</text>
<text x="947.3" y="556.7">P156</text>
<text x="865.7" y="556.7" text-anchor="end">P157</text>
<text x="865.7" y="580.7" text-anchor="end">P158</text>
<text x="1018.5" y="591.7" text-anchor="middle">P159</text>
<text x="1026.5" y="591.7" text-anchor="middle">P160</text>
<text x="955.3" y="609.7">P161</text>
<text x="914.3" y="613.7">P162</text>
<text x="914.3" y="642.7">P163</text>
<text x="914.3" y="650.7">P164</text>
<text x="851.5" y="657.7" text-anchor="middle">P165</text>
<text x="867.5" y="657.7" text-anchor="middle">P166</text>
<text x="947.3" y="666.7">P167</text>
<text x="914.3" y="678.7">P168</text>
<text x="914.3" y="703.7">P169</text>
<text x="963.3" y="707.7">P170</text>
<text x="963.3" y="711.7">P171</text>
<text x="963.3" y="715.7">P172</text>
<text x="963.3" y="719.7">P173</text>
<text x="963.3" y="723.7">P174</text>
<text x="963.3" y="727.7">P175</text>
<text x="914.3" y="735.7">P176</text>
<text x="914.3" y="739.7">P177</text>
<text x="914.3" y="743.7">P178</text>
<text x="843.5" y="304.9" text-anchor="middle">P179</text>
<text x="863.5" y="304.9" text-anchor="middle">P180</text>
<text x="871.5" y="800.7" text-anchor="middle">P181</text>
<text x="883.5" y="800.7" text-anchor="middle">P182</text>
<text x="1179.3" y="193.7">P183</text>
<text x="918.7" y="286.7" text-anchor="end">P184</text>
<text x="932.5" y="259.9" text-anchor="middle">P185</text>
<text x="969.5" y="238.9" text-anchor="middle">P186</text>
<text x="1022.5" y="230.9" text-anchor="middle">P187</text>
<text x="1018.5" y="306.7" text-anchor="middle">P188</text>
<text x="1040.3" y="286.7">P189</text>
<text x="973.5" y="318.7" text-anchor="middle">P190</text>
<text x="1067.5" y="206.9" text-anchor="middle">P191</text>
<text x="1134.3" y="245.7">P192</text>
<text x="1110.3" y="262.7">P193</text>
<text x="1092.5" y="281.7" text-anchor="middle">P194</text>
<text x="1124.5" y="185.9" text-anchor="middle">P195</text>
<text x="1161.5" y="220.7" text-anchor="middle">P196</text>
<text x="1200.3" y="907.7">P197</text>
<text x="986.5" y="794.9" text-anchor="middle">P198</text>
<text x="943.7" y="817.7" text-anchor="end">P199</text>
<text x="959.7" y="837.7" text-anchor="end">P200</text>
<text x="1026.5" y="802.9" text-anchor="middle">P201</text>
<text x="1044.3" y="817.7">P202</text>
<text x="989.5" y="853.7" text-anchor="middle">P203</text>
<text x="1038.5" y="869.7" text-anchor="middle">P204</text>
<text x="1100.5" y="826.9" text-anchor="middle">P205</text>
<text x="1087.5" y="881.7" text-anchor="middle">P206</text>
<text x="1134.3" y="842.7">P207</text>
<text x="1147.3" y="862.7">P208</text>
<text x="1198.5" y="883.9" text-anchor="middle">P209</text>
<text x="1153.5" y="914.7" text-anchor="middle">P210</text>
<text x="1075.5" y="353.9" text-anchor="middle">P211</text>
<text x="1083.5" y="353.9" text-anchor="middle">P212</text>
<text x="1169.5" y="357.9" text-anchor="middle">P213</text>
<text x="1324.5" y="255.9" text-anchor="middle">P214</text>
<text x="1344.5" y="843.7" text-anchor="middle">P215</text>
<text x="1571.3" y="527.7">P216</text>
<text x="1243.5" y="546.7" text-anchor="middle">P217</text>
<text x="1055.5" y="755.7" text-anchor="middle">P218</text>
<text x="1084.5" y="755.7" text-anchor="middle">P219</text>
<text x="1153.5" y="742.7" text-anchor="middle">P220</text>
<text x="1504.5" y="349.9" text-anchor="middle">P221</text>
<text x="1504.5" y="742.7" text-anchor="middle">P222</text>
<text x="1435.5" y="361.9" text-anchor="middle">P223</text>
<text x="1471.5" y="349.9" text-anchor="middle">P224</text>
<text x="1534.3" y="352.7">P225</text>
<text x="1522.3" y="372.7">P226</text>
<text x="1522.3" y="380.7">P227</text>
<text x="1522.3" y="388.7">P228</text>
<text x="1567.3" y="372.7">P229</text>
<text x="1529.5" y="416.7" text-anchor="middle">P230</text>
<text x="1453.7" y="421.7" text-anchor="end">P231</text>
<text x="1575.3" y="474.7">P232</text>
<text x="1524.5" y="512.9" text-anchor="middle">P233</text>
<text x="1541.5" y="546.7" text-anchor="middle">P234</text>
<text x="1575.3" y="605.7">P235</text>
<text x="1571.3" y="711.7">P236</text>
<text x="1530.3" y="637.7">P237</text>
<text x="1457.7" y="690.7" text-anchor="end">P238</text>
<text x="1530.3" y="690.7">P239</text>
<text x="1445.7" y="715.7" text-anchor="end">P240</text>
<text x="1530.3" y="715.7">P241</text>
<text x="1530.3" y="707.7">P242</text>
<text x="1530.3" y="723.7">P243</text>
<text x="1445.7" y="743.7" text-anchor="end">P244</text>
<text x="1534.3" y="739.7">P245</text>
</g>
<path d="M655.5 401.5h8M659.5 398.5v3" stroke="#000" stroke-width="1.8" fill="none"/><path d="M656.7 402h5.6l-2.8 3.5z" fill="#000"/>
<path d="M757.5 406.5h8M761.5 403.5v3" stroke="#000" stroke-width="1.8" fill="none"/><path d="M758.7 407h5.6l-2.8 3.5z" fill="#000"/>
<path d="M663.5 706h8M667.5 703v3" stroke="#000" stroke-width="1.8" fill="none"/><path d="M664.7 706.5h5.6l-2.8 3.5z" fill="#000"/>
<path d="M771.5 684.5h8M775.5 681.5v3" stroke="#000" stroke-width="1.8" fill="none"/><path d="M772.7 685h5.6l-2.8 3.5z" fill="#000"/>
<path d="M861 350.5h8M865 347.5v3" stroke="#000" stroke-width="1.8" fill="none"/><path d="M862.2 351h5.6l-2.8 3.5z" fill="#000"/>
<path d="M1045 490.5h8M1049 487.5v3" stroke="#000" stroke-width="1.8" fill="none"/><path d="M1046.2 491h5.6l-2.8 3.5z" fill="#000"/>
<path d="M857.5 552h8M861.5 549v3" stroke="#000" stroke-width="1.8" fill="none"/><path d="M858.7 552.5h5.6l-2.8 3.5z" fill="#000"/>
<path d="M857.5 577h8M861.5 574v3" stroke="#000" stroke-width="1.8" fill="none"/><path d="M858.7 577.5h5.6l-2.8 3.5z" fill="#000"/>
<path d="M857 759h8M861 756v3" stroke="#000" stroke-width="1.8" fill="none"/><path d="M858.2 759.5h5.6l-2.8 3.5z" fill="#000"/>
<path d="M1522.5 417.5h8M1526.5 414.5v3" stroke="#000" stroke-width="1.8" fill="none"/><path d="M1523.7 418h5.6l-2.8 3.5z" fill="#000"/>
<path d="M1531 686.5h8M1535 683.5v3" stroke="#000" stroke-width="1.8" fill="none"/><path d="M1532.2 687h5.6l-2.8 3.5z" fill="#000"/>
<g font-size="5.4" fill="#2a2a2a" text-anchor="middle">
<text x="634.5" y="320.1" font-size="4.9">PA_FSR</text>
<text x="549" y="390.1" font-size="4.9">PA_FRR</text>
<text x="614" y="378.1">LP COMB -RF</text>
<text x="594" y="409.6">FOG LP -RF</text>
<text x="659" y="413.1">GND-ENG-RT</text>
<text x="716" y="374.1">PDB</text>
<text x="763" y="340.6" font-size="4.9">FR_WHEELSPEED</text>
<text x="804.5" y="377.1">ENGINE CONTROL UNIT</text>
<text x="761.5" y="418.1">GND - BATT LHD</text>
<text x="803.5" y="426.6">BATTERY -LHD</text>
<text x="728.5" y="483.6">ENGINE</text>
<text x="567" y="483.6">HORN</text>
<text x="500" y="492.1" font-size="4.9">PA_FFR</text>
<text x="555" y="520.1">ADAPTIVE CRUISE CONTROL</text>
<text x="555" y="556.6">SRS SENSOR FR</text>
<text x="665" y="594.1" font-size="4.5">STR COLUMN POS</text>
<text x="500" y="623.1" font-size="4.9">PA_FFL</text>
<text x="585.5" y="695.6">FOG LP-LF</text>
<text x="601.5" y="711.6">LP COMB-LF</text>
<text x="666.5" y="716.1">GND-ENG-LT</text>
<text x="549" y="733.1" font-size="4.9">PA_FLL</text>
<text x="687.5" y="684.1" font-size="4.5">GND_PSM</text>
<text x="730.5" y="684.1" font-size="4.5">POWER STEERING MTR</text>
<text x="775.5" y="695.1">GND - BATT RHD</text>
<text x="820.5" y="703.6">BATTERY -RHD</text>
<text x="755" y="773.6" font-size="4.9">FL_WHEELSPEED</text>
<text x="799" y="761.1" font-size="4.5">STEERING ECU</text>
<text x="634.5" y="798.1" font-size="4.9">PA_FSL</text>
<text x="865.5" y="364.1" font-size="4.9">GND RT A PILLAR</text>
<text x="919.5" y="369.1">IGNITION SW-RHD</text>
<text x="965" y="393.6">STEERING WHEEL RHD</text>
<text x="919.5" y="401.1">IP CLUSTER-RHD</text>
<text x="861.5" y="426.6">PEDALS-RHD</text>
<text x="919.5" y="426.6">PASS AIRBAG-LHD</text>
<text x="863" y="463.1">ADAS-SPEAKER-RHD</text>
<text x="920.5" y="454.6">DRVR AIRBAG- RHD</text>
<text x="920.5" y="479.6">LIGHTING SW-RHD</text>
<text x="928.5" y="519.6">BODY CONTROL MODULE</text>
<text x="1000" y="511.6" font-size="4.5">Lane Departure Camera</text>
<text x="1049" y="503.1">GND-AIRBAG</text>
<text x="1096.5" y="519.6">AIRBAG ECU</text>
<text x="957" y="589.6">AUDIO UNIT</text>
<text x="994" y="589.6">CD PLAYER</text>
<text x="861.5" y="565.1">GND-FM</text>
<text x="861" y="589.1">GND-ACC</text>
<text x="1079.5" y="655.1" font-size="4.5">SENSOR FUSION</text>
<text x="1095.5" y="573.6">BRAKE CONTROL UNIT</text>
<text x="963" y="631.1">ID-SWITCH</text>
<text x="919.5" y="626.6">IGNITION SW-LHD</text>
<text x="920.5" y="658.6">IP CLUSTER-LHD</text>
<text x="861.5" y="675.6">PEDALS-LHD</text>
<text x="957.5" y="687.6">ADAS SPEAKER-LHD</text>
<text x="920" y="691.6">DRVR AIRBAG-LHD</text>
<text x="920" y="715.6">PASS AIRBAG- RHD</text>
<text x="965" y="740.6">STEERING WHEEL LHD</text>
<text x="920.5" y="752.6">LIGHTING SW-LHD</text>
<text x="861" y="773.1" font-size="4.9">GND LF A PILLAR</text>
<text x="855" y="311.6">MIRROR_DR_RHD</text>
<text x="880" y="809.6">MIRROR_DR_LHD</text>
<text x="908.5" y="295.6">DOOR_ECU_RHD</text>
<text x="934.5" y="266.6">WINDOW_CONTROLS_RHD</text>
<text x="972" y="246.1">SW_DOOR_LOCK_DR_RHD</text>
<text x="1024.5" y="238.6">SW_DOOR_LOCK_PS_LHD</text>
<text x="1048.5" y="295.6">SW_LIFTGATE_RHD</text>
<text x="1016" y="315.1">SW_FUEL_LID_RHD</text>
<text x="979.5" y="328.6">SPKR_RF_Door</text>
<text x="1069" y="213.6">SW_DOOR_LOCKOUT_PS_RHD</text>
<text x="1143" y="254.6">WINDOW_MOTOR_PASS_LHD</text>
<text x="1118.5" y="270.6">WINDOW_MOTOR_DRV_RHD</text>
<text x="1094.5" y="291.6">SW_VALET_LOCKOUT_RHD</text>
<text x="1122.5" y="193.6">MT_DOOR_LOCK_DR_RHD</text>
<text x="1165" y="230.6">MT_DOOR_LOCK_PS_LHD</text>
<text x="1187" y="201.6">LP_COURTESY_DR_RHD</text>
<text x="987.5" y="801.6">SPKR_LF_Door</text>
<text x="932.5" y="826.1">DOOR_ECU_LHD</text>
<text x="951" y="846.6">WINDOW_CONTROLS_LHD</text>
<text x="1024.5" y="809.6">SW_FUEL_LID_LHD</text>
<text x="1053" y="826.1">SW_LIFTGATE_LHD</text>
<text x="990.5" y="862.6">SW_DOOR_LOCK DR_LHD</text>
<text x="1036" y="879.6">SW_DOOR_LOCK_PS_RHD</text>
<text x="1102" y="834.6">SW_VALET_LOCKOUT_LHD</text>
<text x="1081.5" y="891.1">SW_DOOR_LOCKOUT_PS_LHD</text>
<text x="1142.5" y="850.6">WINDOW_MOTOR_DRV_LHD</text>
<text x="1155" y="871.1">WINDOW_MOTOR_PASS_RHD</text>
<text x="1198" y="891.1">MT_DOOR_LOCK_PS_RHD</text>
<text x="1208.5" y="916.6">LP_COURTESY_DR_LHD</text>
<text x="1155" y="924.6">MT_DOOR_LOCK_DR_LHD</text>
<text x="1071" y="361.1" font-size="4.5">RSD CAMERA RT</text>
<text x="1169.5" y="365.1">DOOR AJAR RTFT</text>
<text x="1324" y="263.1">SPKR-RtRrDoor</text>
<text x="1345" y="855.1">SPKR-LtRrDoor</text>
<text x="1247" y="565.1">REAR JACK</text>
<text x="1071" y="778.1" font-size="4.5">RSD CAMERA LT</text>
<text x="1157.5" y="760.6">DOOR AJAR LTFT</text>
<text x="1437" y="368.6">DOOR AJAR RTRR</text>
<text x="1469" y="356.6">FUEL LID</text>
<text x="1506" y="356.6">RR_WHEELSPEED</text>
<text x="1540.5" y="360.1">BS_BR</text>
<text x="1529" y="397.6">LP-COMB -RR</text>
<text x="1573.5" y="381.6" font-size="4.9">PA_BRR</text>
<text x="1526.5" y="429.6">GND-LR</text>
<text x="1447.5" y="430.6">SPKR-RtRrCargo</text>
<text x="1581.5" y="484.1" font-size="4.9">PA_BFR</text>
<text x="1522.5" y="519.6">LP-LICENSE</text>
<text x="1573.5" y="545.1">CHMSL</text>
<text x="1541" y="560.6">LIFTGATE LATCH</text>
<text x="1582" y="614.1" font-size="4.9">PA_BFL</text>
<text x="1578" y="725.1" font-size="4.9">PA_BLL</text>
<text x="1534.5" y="654.6">CD CHANGER</text>
<text x="1534.5" y="699.1">GND-RR</text>
<text x="1449.5" y="699.6">SPKR- LtRrCargo</text>
<text x="1537.5" y="732.6">LP-COMB -LR</text>
<text x="1435" y="732.6">WOOFER</text>
<text x="1435" y="760.6">DOOR AJAR LTRR</text>
<text x="1500" y="760.6">RL_WHEELSPEED</text>
<text x="1540.5" y="756.1">BS_BL</text>
</g>
<g font-size="4.8">
<text x="735" y="447" fill="#0a6ae0">ILC5</text>
<text x="735" y="456" fill="#d75f00">ILC5</text>
<text x="852" y="389.5" fill="#d75f00">ILC6</text>
<text x="858" y="389.5" fill="#0a6ae0">ILC6</text>
<text x="852" y="728" fill="#0a6ae0">ILC7</text>
<text x="858" y="728" fill="#d75f00">ILC7</text>
<text x="1090" y="535.5" fill="#0a6ae0">ILC8</text>
<text x="1096" y="535.5" fill="#d75f00">ILC8</text>
<text x="897" y="327.5" fill="#0a6ae0">ILC3</text>
<text x="903" y="327.5" fill="#d75f00">ILC3</text>
<text x="935.5" y="329" fill="#d75f00">ILC4</text>
<text x="935.5" y="336.5" fill="#0a6ae0">ILC4</text>
<text x="951.5" y="765.5" fill="#d75f00">ILC1</text>
<text x="951.5" y="773.5" fill="#0a6ae0">ILC1</text>
<text x="906" y="793" fill="#d75f00">ILC2</text>
<text x="912" y="793" fill="#0a6ae0">ILC2</text>
<text x="929.5" y="313" fill="#a0a018">Flex Region</text>
<text x="947" y="784" fill="#a0a018">Flex Region</text>
<text x="1213" y="353" fill="#0a6ae0">ILC9</text>
<text x="1213" y="361.5" fill="#d75f00">ILC9</text>
<text x="1213" y="741" fill="#d75f00">ILC10</text>
<text x="1213" y="749" fill="#0a6ae0">ILC10</text>
</g>
</svg>
<style>.sf{position:absolute;top:1002px;height:20px;border:1px solid;border-color:#a0a0a0 #fff #fff #a0a0a0;background:#f0f0f0}</style>
<div class="a" style="left:0;top:996px;width:1678px;height:1px;background:#fbfbfb"></div>
<svg class="a" style="left:424px;top:990px" width="24" height="6"><path d="M2 4.5l2.5-3.5 2.5 3.5zM12.5 1l3.2 3.5 3.2-3.5z" fill="#000"/></svg>
<div class="t" style="left:5px;top:1006px;font-size:11px">Select</div>
<div class="sf" style="left:986px;width:143px"></div>
<div class="sf" style="left:1131px;width:20px"></div>
<div class="sf" style="left:1156px;width:20px"></div>
<div class="sf" style="left:1181px;width:20px"></div>
<div class="sf" style="left:1209px;width:120px"></div>
<div class="sf" style="left:1335px;width:249px"></div>
<div class="sf" style="left:1589px;width:20px"></div>
<div class="sf" style="left:1613px;width:60px"></div>
<div class="t" style="left:1210px;top:1006px;font-size:11px">Select Count:0</div>
<div class="t" style="left:1337px;top:1006px;font-size:11.5px;font-weight:bold">-15.65,25.23</div>
<div class="t" style="left:1634px;top:1006px;font-size:11px">EN</div>
<svg class="a" style="left:930px;top:1000px" width="690" height="24" viewBox="930 1000 690 24">
<rect x="938.5" y="1005.5" width="13" height="13" fill="#fff" stroke="#888"/><path d="M941 1008h3v3h-3zM946 1008h3v3h-3zM941 1013h3v3h-3zM946 1013h3v3h-3z" fill="#222"/>
<circle cx="971" cy="1011.5" r="5" fill="#fff" stroke="#6a86c0" stroke-width="1.2"/><path d="M964.5 1008v8" stroke="#c03030" stroke-width="1.2"/><rect x="963" y="1010.5" width="3" height="3" fill="#fff" stroke="#000" stroke-width=".8"/>
<path d="M992 1005.5l12 6.5-12 6.5z" fill="#444" stroke="#222"/>
<path d="M1134 1005h14v6c0 4-3 7-7 8-4-1-7-4-7-8z" fill="#999" stroke="#777"/>
<path d="M1166 1004v16M1159 1009h14" stroke="#888" stroke-width="1.6"/><circle cx="1166" cy="1008" r="3" fill="#999"/>
<path d="M1184 1005h14l-5.5 7v7l-3-2v-5z" fill="#aaa" stroke="#888"/>
<circle cx="1599" cy="1007" r="3.2" fill="#c8b878" stroke="#a09050" stroke-width=".6"/><path d="M1593.5 1019v-5c0-2.5 2-4 5.5-4s5.5 1.5 5.5 4v5z" fill="#58a868" stroke="#3c8850" stroke-width=".6"/>
</svg>
</body></html>
